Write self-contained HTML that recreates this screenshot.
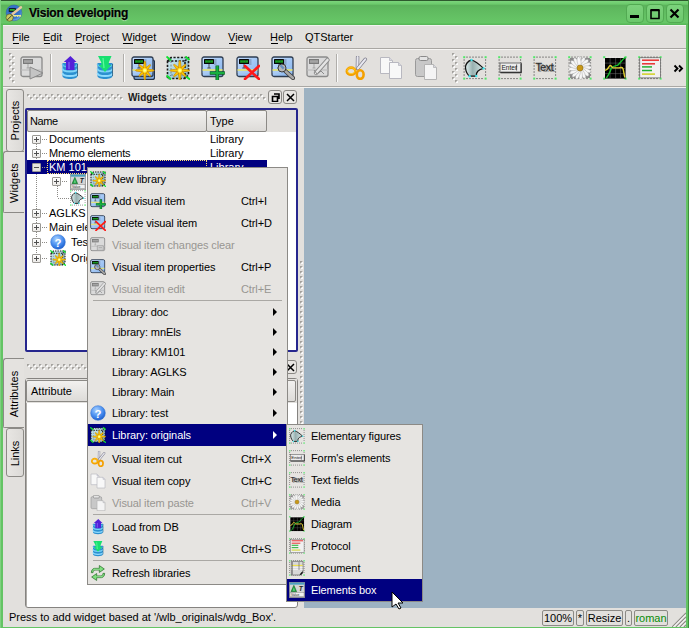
<!DOCTYPE html>
<html><head><meta charset="utf-8">
<style>
*{box-sizing:border-box;margin:0;padding:0}
html,body{width:689px;height:628px;overflow:hidden}
body{position:relative;background:#62c262;font-family:"Liberation Sans",sans-serif;font-size:11px;color:#000}
.a{position:absolute}
.t{position:absolute;white-space:nowrap;line-height:14px;font-size:11px}
.ul{text-decoration:underline}
.w{color:#fff}
.dis{color:#989692}
</style></head><body>
<div class="a" style="left:0px;top:0px;width:689px;height:628px;background:#64c464"></div>
<div class="a" style="left:0px;top:0px;width:689px;height:1px;background:#2e5a2e"></div>
<div class="a" style="left:0px;top:1px;width:689px;height:24px;background:linear-gradient(#7cd47c 0,#6ccb6c 3px,#5cb35c 4.5px,#5fb95f 8px,#67c767 22px,#58b858 23px,#58b858 24px)"></div>
<div class="a" style="left:0px;top:0px;width:1px;height:628px;background:#80d080"></div>
<div class="a" style="left:688px;top:0px;width:1px;height:628px;background:#3e8e3e"></div>
<svg class="a" style="left:5px;top:4px" width="18" height="18" viewBox="5 4 18 18"><defs><radialGradient id="gapp" cx=".45" cy=".4" r=".6"><stop offset="0" stop-color="#2a5cb8"/><stop offset=".75" stop-color="#3a7ad0"/><stop offset="1" stop-color="#7ab0e8"/></radialGradient></defs><circle cx="14" cy="12.9" r="7.9" fill="url(#gapp)" stroke="#2a5aa0" stroke-width=".5"/><rect x="8.8" y="8.2" width="7" height="3.6" fill="#0a0a0a"/><rect x="9.6" y="9.1" width="5.2" height="1.6" fill="#30c030"/><path d="M12.5 14L21 7.2" stroke="#e8c8a0" stroke-width="2.4" stroke-linecap="round"/><path d="M12.5 15.6H21M15 15.6v1.5M17.5 15.6v1.5M20 15.6v1.3" stroke="#e8e890" stroke-width="1.1"/><circle cx="9.6" cy="17.6" r="3.6" fill="#c8c860" stroke="#50501a" stroke-width=".6"/><path d="M7.2 20l4.8-4.8" stroke="#333" stroke-width=".9"/></svg>
<div class="t" style="left:29px;top:6px;font-size:12px;font-weight:bold;line-height:15px;letter-spacing:-0.2px;-webkit-text-stroke:0.25px #000;text-shadow:0 1px 1px rgba(220,255,220,.6)">Vision developing</div>
<div class="a" style="left:626px;top:4px;width:18px;height:19px;border-radius:4px;background:linear-gradient(#7cd27c,#6cc86c);border:1px solid #52aa52"></div>
<div class="a" style="left:646px;top:4px;width:18px;height:19px;border-radius:4px;background:linear-gradient(#7cd27c,#6cc86c);border:1px solid #52aa52"></div>
<div class="a" style="left:666px;top:4px;width:18px;height:19px;border-radius:4px;background:linear-gradient(#7cd27c,#6cc86c);border:1px solid #52aa52"></div>
<svg class="a" style="left:626px;top:4px" width="60" height="19"><rect x="4" y="11" width="9" height="3" fill="#000"/><path d="M25 6.5h8v8h-8z" fill="none" stroke="#000" stroke-width="1.6"/><path d="M24.5 6h9" stroke="#000" stroke-width="2"/><path d="M44.5 5.5l8 8M52.5 5.5l-8 8" stroke="#000" stroke-width="2.2"/></svg>
<div class="a" style="left:3px;top:25px;width:683px;height:602px;background:#e2e0dd"></div>
<div class="a" style="left:3px;top:25px;width:683px;height:1px;background:#f4f3f1"></div>
<div class="a" style="left:3px;top:48px;width:683px;height:1px;background:#a9a7a3"></div>
<div class="a" style="left:3px;top:49px;width:683px;height:1px;background:#f6f5f3"></div>
<div class="t" style="left:12px;top:30px;">File</div>
<div class="a" style="left:13px;top:43px;width:6px;height:1px;background:#000"></div>
<div class="t" style="left:43px;top:30px;">Edit</div>
<div class="a" style="left:44px;top:43px;width:6px;height:1px;background:#000"></div>
<div class="t" style="left:75px;top:30px;">Project</div>
<div class="a" style="left:76px;top:43px;width:6px;height:1px;background:#000"></div>
<div class="t" style="left:122px;top:30px;">Widget</div>
<div class="a" style="left:123px;top:43px;width:10px;height:1px;background:#000"></div>
<div class="t" style="left:171px;top:30px;">Window</div>
<div class="a" style="left:172px;top:43px;width:10px;height:1px;background:#000"></div>
<div class="t" style="left:228px;top:30px;">View</div>
<div class="a" style="left:229px;top:43px;width:7px;height:1px;background:#000"></div>
<div class="t" style="left:270px;top:30px;">Help</div>
<div class="a" style="left:271px;top:43px;width:7px;height:1px;background:#000"></div>
<div class="t" style="left:305px;top:30px;">QTStarter</div>
<div class="a" style="left:3px;top:86px;width:683px;height:1px;background:#aaa8a4"></div>
<div class="a" style="left:3px;top:87px;width:683px;height:1px;background:#f4f3f1"></div>
<div class="a" style="left:9px;top:53px;width:3px;height:3px;background:linear-gradient(135deg,#a4a29e 45%,#fbfbfb 55%)"></div><div class="a" style="left:12px;top:56px;width:3px;height:3px;background:linear-gradient(135deg,#a4a29e 45%,#fbfbfb 55%)"></div><div class="a" style="left:9px;top:59px;width:3px;height:3px;background:linear-gradient(135deg,#a4a29e 45%,#fbfbfb 55%)"></div><div class="a" style="left:12px;top:62px;width:3px;height:3px;background:linear-gradient(135deg,#a4a29e 45%,#fbfbfb 55%)"></div><div class="a" style="left:9px;top:65px;width:3px;height:3px;background:linear-gradient(135deg,#a4a29e 45%,#fbfbfb 55%)"></div><div class="a" style="left:12px;top:68px;width:3px;height:3px;background:linear-gradient(135deg,#a4a29e 45%,#fbfbfb 55%)"></div><div class="a" style="left:9px;top:71px;width:3px;height:3px;background:linear-gradient(135deg,#a4a29e 45%,#fbfbfb 55%)"></div><div class="a" style="left:12px;top:74px;width:3px;height:3px;background:linear-gradient(135deg,#a4a29e 45%,#fbfbfb 55%)"></div><div class="a" style="left:9px;top:77px;width:3px;height:3px;background:linear-gradient(135deg,#a4a29e 45%,#fbfbfb 55%)"></div><div class="a" style="left:12px;top:80px;width:3px;height:3px;background:linear-gradient(135deg,#a4a29e 45%,#fbfbfb 55%)"></div>
<div class="a" style="left:452px;top:53px;width:3px;height:3px;background:linear-gradient(135deg,#a4a29e 45%,#fbfbfb 55%)"></div><div class="a" style="left:455px;top:56px;width:3px;height:3px;background:linear-gradient(135deg,#a4a29e 45%,#fbfbfb 55%)"></div><div class="a" style="left:452px;top:59px;width:3px;height:3px;background:linear-gradient(135deg,#a4a29e 45%,#fbfbfb 55%)"></div><div class="a" style="left:455px;top:62px;width:3px;height:3px;background:linear-gradient(135deg,#a4a29e 45%,#fbfbfb 55%)"></div><div class="a" style="left:452px;top:65px;width:3px;height:3px;background:linear-gradient(135deg,#a4a29e 45%,#fbfbfb 55%)"></div><div class="a" style="left:455px;top:68px;width:3px;height:3px;background:linear-gradient(135deg,#a4a29e 45%,#fbfbfb 55%)"></div><div class="a" style="left:452px;top:71px;width:3px;height:3px;background:linear-gradient(135deg,#a4a29e 45%,#fbfbfb 55%)"></div><div class="a" style="left:455px;top:74px;width:3px;height:3px;background:linear-gradient(135deg,#a4a29e 45%,#fbfbfb 55%)"></div><div class="a" style="left:452px;top:77px;width:3px;height:3px;background:linear-gradient(135deg,#a4a29e 45%,#fbfbfb 55%)"></div><div class="a" style="left:455px;top:80px;width:3px;height:3px;background:linear-gradient(135deg,#a4a29e 45%,#fbfbfb 55%)"></div>
<div class="a" style="left:50px;top:54px;width:1px;height:28px;background:#b0aeaa"></div>
<div class="a" style="left:51px;top:54px;width:1px;height:28px;background:#fbfbfb"></div>
<div class="a" style="left:123px;top:54px;width:1px;height:28px;background:#b0aeaa"></div>
<div class="a" style="left:124px;top:54px;width:1px;height:28px;background:#fbfbfb"></div>
<div class="a" style="left:336px;top:54px;width:1px;height:28px;background:#b0aeaa"></div>
<div class="a" style="left:337px;top:54px;width:1px;height:28px;background:#fbfbfb"></div>
<svg class="a" style="left:20px;top:56px" width="24" height="24" viewBox="0 0 24 24"><rect x="1" y="1" width="21" height="19.5" rx="2" fill="#dadada" stroke="#8a8a8a" stroke-width="1.3"/><rect x="3" y="3" width="10" height="5" fill="#7a7a7a"/><rect x="4" y="4.2" width="8" height="2.6" fill="#a4a4a4"/><path d="M1.5 14h20" stroke="#c4c4c4" stroke-width="1.6"/><path d="M8 8v4M6.5 12h3" stroke="#9a9a9a" stroke-width=".8"/><path d="M10 11v12l13-6z" fill="#c4c4c4" stroke="#8a8a8a" stroke-width="1"/></svg>
<svg class="a" style="left:58px;top:56px" width="24" height="24" viewBox="0 0 24 24"><path d="M4.5 7v13c0 2 3.5 3 7.5 3s7.5-1 7.5-3V7z" fill="#2c90d0"/><path d="M4.5 8c0 2 3.5 3 7.5 3s7.5-1 7.5-3" fill="none" stroke="#60c0f0" stroke-width="1.6"/><path d="M4.5 12.5c0 2 3.5 3 7.5 3s7.5-1 7.5-3" fill="none" stroke="#80d4f8" stroke-width="1.8"/><path d="M4.5 17c0 2 3.5 3 7.5 3s7.5-1 7.5-3" fill="none" stroke="#90dcff" stroke-width="1.8"/><path d="M19.5 8v12" stroke="#1c4a6a" stroke-width="1" opacity=".7"/><path d="M12.4 0L18.6 6H16.5V14H8V6H5.8Z" fill="#5420d8"/><path d="M11 6v7" stroke="#7a58f0" stroke-width="1.5"/></svg>
<svg class="a" style="left:93px;top:56px" width="24" height="24" viewBox="0 0 24 24"><path d="M4.5 7v13c0 2 3.5 3 7.5 3s7.5-1 7.5-3V7z" fill="#2c90d0"/><path d="M4.5 8c0 2 3.5 3 7.5 3s7.5-1 7.5-3" fill="none" stroke="#60c0f0" stroke-width="1.6"/><path d="M4.5 12.5c0 2 3.5 3 7.5 3s7.5-1 7.5-3" fill="none" stroke="#80d4f8" stroke-width="1.8"/><path d="M4.5 17c0 2 3.5 3 7.5 3s7.5-1 7.5-3" fill="none" stroke="#90dcff" stroke-width="1.8"/><path d="M19.5 8v12" stroke="#1c4a6a" stroke-width="1" opacity=".7"/><path d="M5 0H18.5L15.8 6.5V9H18.3L12 16L5.8 9H8.3V6.5Z" fill="#18e070"/><path d="M10 2l1 10" stroke="#60f8a0" stroke-width="1.2"/></svg>
<svg class="a" style="left:131px;top:56px" width="24" height="24" viewBox="0 0 24 24"><defs><linearGradient id="gb2" x1="0" y1="0" x2="1" y2="1"><stop offset="0" stop-color="#c4deff"/><stop offset="1" stop-color="#84b2ec"/></linearGradient></defs><rect x="3" y="4" width="20.5" height="19.5" rx="2" fill="#8ab6ee" stroke="#23334a" stroke-width="1.3"/><rect x="1" y="1" width="21" height="19.5" rx="2" fill="url(#gb2)" stroke="#2e3c50" stroke-width="1.3"/><rect x="13" y="3" width="2.5" height="6" fill="#7890b0" opacity=".6"/><rect x="3" y="3" width="10" height="5" rx=".5" fill="#060606"/><rect x="4" y="4.3" width="8" height="2.4" fill="#1ea01e"/><path d="M4.5 4.3v2.4M7 4.3v2.4M9.5 4.3v2.4" stroke="#063" stroke-width=".5"/><path d="M8 8v4M6.3 12h3.4" stroke="#444" stroke-width=".9"/><path d="M1.5 14h20" stroke="#e2e27a" stroke-width="1.8"/><path d="M1.5 16h20" stroke="#b4d0f0" stroke-width=".8"/><path d="M13.80 16.20 L22.60 15.10 L23.20 14.50 L22.60 13.90 L13.80 12.80ZM12.60 15.70 L18.68 20.23 L19.53 20.23 L19.53 19.38 L15.00 13.30ZM12.10 14.50 L13.20 23.30 L13.80 23.90 L14.40 23.30 L15.50 14.50ZM12.60 13.30 L8.07 19.38 L8.07 20.23 L8.92 20.23 L15.00 15.70ZM13.80 12.80 L5.00 13.90 L4.40 14.50 L5.00 15.10 L13.80 16.20ZM15.00 13.30 L8.92 8.77 L8.07 8.77 L8.07 9.62 L12.60 15.70ZM15.50 14.50 L14.40 5.70 L13.80 5.10 L13.20 5.70 L12.10 14.50ZM15.00 15.70 L19.53 9.62 L19.53 8.77 L18.68 8.77 L12.60 13.30Z" fill="#ffcc00" stroke="#d08800" stroke-width=".7" stroke-linejoin="round"/><circle cx="13.8" cy="14.5" r="2.4" fill="#ffee40"/><circle cx="13.8" cy="14.5" r="1.3" fill="#ffffa0"/></svg>
<svg class="a" style="left:166px;top:56px" width="24" height="24" viewBox="0 0 24 24"><defs><linearGradient id="gl3" x1="0" y1="0" x2="1" y2="1"><stop offset="0" stop-color="#d8eef4"/><stop offset=".5" stop-color="#a8d0dc"/><stop offset="1" stop-color="#84b4c4"/></linearGradient></defs><path d="M1.5 5L5 1.5H22.5V19L19 22.5H1.5Z" fill="url(#gl3)"/><g fill="none" stroke="#5a7a84" stroke-width=".8" stroke-dasharray="2 1.5"><path d="M5 1.5V19H22.5M5 19L1.5 22.5"/></g><g fill="none" stroke="#1a1a1a" stroke-width="1.6" stroke-dasharray="2.2 1.5"><path d="M1.5 5L5 1.5H22.5V19L19 22.5H1.5Z"/><path d="M1.5 5H19V22.5M19 5L22.5 1.5"/></g><path d="M0.5 0.5l4.5 4M19.5 0.5l4 3.5M0.5 19.5l4.5 4M20 20.5l4 3" stroke="#10e030" stroke-width="1.9"/><path d="M13.80 16.20 L23.20 15.10 L23.80 14.50 L23.20 13.90 L13.80 12.80ZM12.60 15.70 L19.03 20.58 L19.88 20.58 L19.88 19.73 L15.00 13.30ZM12.10 14.50 L13.20 23.90 L13.80 24.50 L14.40 23.90 L15.50 14.50ZM12.60 13.30 L7.72 19.73 L7.72 20.58 L8.57 20.58 L15.00 15.70ZM13.80 12.80 L4.40 13.90 L3.80 14.50 L4.40 15.10 L13.80 16.20ZM15.00 13.30 L8.57 8.42 L7.72 8.42 L7.72 9.27 L12.60 15.70ZM15.50 14.50 L14.40 5.10 L13.80 4.50 L13.20 5.10 L12.10 14.50ZM15.00 15.70 L19.88 9.27 L19.88 8.42 L19.03 8.42 L12.60 13.30Z" fill="#ffcc00" stroke="#d08800" stroke-width=".7" stroke-linejoin="round"/><circle cx="13.8" cy="14.5" r="2.4" fill="#ffee40"/><circle cx="13.8" cy="14.5" r="1.3" fill="#ffffa0"/></svg>
<svg class="a" style="left:201px;top:56px" width="24" height="24" viewBox="0 0 24 24"><defs><linearGradient id="gb4" x1="0" y1="0" x2="1" y2="1"><stop offset="0" stop-color="#c4deff"/><stop offset="1" stop-color="#84b2ec"/></linearGradient></defs><rect x="1" y="1" width="21" height="19.5" rx="2" fill="url(#gb4)" stroke="#2e3c50" stroke-width="1.3"/><rect x="13" y="3" width="2.5" height="6" fill="#7890b0" opacity=".6"/><rect x="3" y="3" width="10" height="5" rx=".5" fill="#060606"/><rect x="4" y="4.3" width="8" height="2.4" fill="#1ea01e"/><path d="M4.5 4.3v2.4M7 4.3v2.4M9.5 4.3v2.4" stroke="#063" stroke-width=".5"/><path d="M8 8v4M6.3 12h3.4" stroke="#444" stroke-width=".9"/><path d="M1.5 14h20" stroke="#e2e27a" stroke-width="1.8"/><path d="M1.5 16h20" stroke="#b4d0f0" stroke-width=".8"/><path d="M16.3 9.5v15M8.8 17h15" stroke="#0a5a20" stroke-width="3.6"/><path d="M16.3 10v14M9.3 17h14" stroke="#18b040" stroke-width="2.2"/></svg>
<svg class="a" style="left:236px;top:56px" width="24" height="24" viewBox="0 0 24 24"><defs><linearGradient id="gb5" x1="0" y1="0" x2="1" y2="1"><stop offset="0" stop-color="#c4deff"/><stop offset="1" stop-color="#84b2ec"/></linearGradient></defs><rect x="1" y="1" width="21" height="19.5" rx="2" fill="url(#gb5)" stroke="#2e3c50" stroke-width="1.3"/><rect x="13" y="3" width="2.5" height="6" fill="#7890b0" opacity=".6"/><rect x="3" y="3" width="10" height="5" rx=".5" fill="#060606"/><rect x="4" y="4.3" width="8" height="2.4" fill="#1ea01e"/><path d="M4.5 4.3v2.4M7 4.3v2.4M9.5 4.3v2.4" stroke="#063" stroke-width=".5"/><path d="M8 8v4M6.3 12h3.4" stroke="#444" stroke-width=".9"/><path d="M1.5 14h20" stroke="#e2e27a" stroke-width="1.8"/><path d="M1.5 16h20" stroke="#b4d0f0" stroke-width=".8"/><path d="M9 10l14 13M23 10L9 23" stroke="#ff1818" stroke-width="2.6" stroke-linecap="round"/></svg>
<svg class="a" style="left:271px;top:56px" width="24" height="24" viewBox="0 0 24 24"><defs><linearGradient id="gb6" x1="0" y1="0" x2="1" y2="1"><stop offset="0" stop-color="#c4deff"/><stop offset="1" stop-color="#84b2ec"/></linearGradient></defs><rect x="1" y="1" width="21" height="19.5" rx="2" fill="url(#gb6)" stroke="#2e3c50" stroke-width="1.3"/><rect x="13" y="3" width="2.5" height="6" fill="#7890b0" opacity=".6"/><rect x="3" y="3" width="10" height="5" rx=".5" fill="#060606"/><rect x="4" y="4.3" width="8" height="2.4" fill="#1ea01e"/><path d="M4.5 4.3v2.4M7 4.3v2.4M9.5 4.3v2.4" stroke="#063" stroke-width=".5"/><path d="M8 8v4M6.3 12h3.4" stroke="#444" stroke-width=".9"/><path d="M1.5 14h20" stroke="#e2e27a" stroke-width="1.8"/><path d="M1.5 16h20" stroke="#b4d0f0" stroke-width=".8"/><path d="M12 13l10 9" stroke="#3a3a3a" stroke-width="4.2" stroke-linecap="round"/><path d="M12 13l10 9" stroke="#a8a8a8" stroke-width="2.6" stroke-linecap="round"/><circle cx="11" cy="12" r="4" fill="#b8b8b8" stroke="#3a3a3a" stroke-width="1"/><path d="M9.5 9.2l3.2 3.4" stroke="#6a90c0" stroke-width="2.4"/></svg>
<svg class="a" style="left:306px;top:56px" width="24" height="24" viewBox="0 0 24 24"><rect x="1" y="1" width="21" height="19.5" rx="2" fill="#dadada" stroke="#8a8a8a" stroke-width="1.3"/><rect x="3" y="3" width="10" height="5" fill="#7a7a7a"/><rect x="4" y="4.2" width="8" height="2.6" fill="#a4a4a4"/><path d="M1.5 14h20" stroke="#c4c4c4" stroke-width="1.6"/><path d="M8 8v4M6.5 12h3" stroke="#9a9a9a" stroke-width=".8"/><path d="M10 17L21.5 4" stroke="#8a8a8a" stroke-width="4.2" stroke-linecap="round"/><path d="M10 17L21.5 4" stroke="#e4e4e4" stroke-width="2.6" stroke-linecap="round"/><path d="M8 14l3 4M12 17l3-2 3 3" stroke="#8a8a8a" fill="none" stroke-width="1"/></svg>
<svg class="a" style="left:344px;top:56px" width="24" height="24" viewBox="0 0 24 24"><path d="M13.6 1L13.4 12.5" stroke="#7a7a88" stroke-width="3.4" stroke-linecap="round"/><path d="M13.6 1L13.4 12.5" stroke="#e8e8f0" stroke-width="2" stroke-linecap="round"/><path d="M21.4 3.2L13.8 12.5" stroke="#7a7a88" stroke-width="3.4" stroke-linecap="round"/><path d="M21.4 3.2L13.8 12.5" stroke="#e8e8f0" stroke-width="2" stroke-linecap="round"/><ellipse cx="7.1" cy="15.2" rx="4.3" ry="3.6" fill="none" stroke="#f4a000" stroke-width="2.6"/><ellipse cx="16.2" cy="18.6" rx="3.4" ry="4.3" fill="none" stroke="#f4a000" stroke-width="2.6"/><ellipse cx="7.1" cy="14.6" rx="4" ry="3" fill="none" stroke="#ffd020" stroke-width="1" opacity=".8"/></svg>
<svg class="a" style="left:379px;top:56px" width="24" height="24" viewBox="0 0 24 24"><path d="M1.5 1.5H10.5L13.5 4.5V17.5H1.5Z" fill="#f8f8f8" stroke="#b8b8c0" stroke-width="1"/><path d="M10.5 1.5V4.5H13.5" fill="#d8d8e0" stroke="#b8b8c0" stroke-width=".8"/><path d="M10.5 6.5H19.5L22.5 9.5V22.5H10.5Z" fill="#f8f8f8" stroke="#b8b8c0" stroke-width="1"/><path d="M19.5 6.5V9.5H22.5" fill="#d8d8e0" stroke="#b8b8c0" stroke-width=".8"/></svg>
<svg class="a" style="left:414px;top:56px" width="24" height="24" viewBox="0 0 24 24"><rect x="1.5" y="2.5" width="16" height="18" rx="2" fill="#c8c8c8" stroke="#9a9a9a"/><rect x="5" y="0.5" width="9" height="4" rx="1.5" fill="#e4e4e4" stroke="#8a8a8a"/><path d="M10.5 8.5H19.5L22.5 11.5V23.5H10.5Z" fill="#f4f4f4" stroke="#b4b4b4" stroke-width="1"/><path d="M19.5 8.5V11.5H22.5" fill="#d8d8e0" stroke="#b4b4b4" stroke-width=".8"/></svg>
<svg class="a" style="left:463px;top:56px" width="24" height="24" viewBox="0 0 24 24"><g fill="#2a2a2a"><rect x="3.5" y=".6" width="1" height="1"/><rect x="3.5" y="22.1" width="1" height="1"/><rect x=".6" y="3.5" width="1" height="1"/><rect x="22.1" y="3.5" width="1" height="1"/><rect x="6.5" y=".6" width="1" height="1"/><rect x="6.5" y="22.1" width="1" height="1"/><rect x=".6" y="6.5" width="1" height="1"/><rect x="22.1" y="6.5" width="1" height="1"/><rect x="9.5" y=".6" width="1" height="1"/><rect x="9.5" y="22.1" width="1" height="1"/><rect x=".6" y="9.5" width="1" height="1"/><rect x="22.1" y="9.5" width="1" height="1"/><rect x="12.5" y=".6" width="1" height="1"/><rect x="12.5" y="22.1" width="1" height="1"/><rect x=".6" y="12.5" width="1" height="1"/><rect x="22.1" y="12.5" width="1" height="1"/><rect x="15.5" y=".6" width="1" height="1"/><rect x="15.5" y="22.1" width="1" height="1"/><rect x=".6" y="15.5" width="1" height="1"/><rect x="22.1" y="15.5" width="1" height="1"/><rect x="18.5" y=".6" width="1" height="1"/><rect x="18.5" y="22.1" width="1" height="1"/><rect x=".6" y="18.5" width="1" height="1"/><rect x="22.1" y="18.5" width="1" height="1"/></g><g fill="#50e868"><rect x=".2" y=".2" width="2" height="2"/><rect x="21.6" y=".2" width="2" height="2"/><rect x=".2" y="21.6" width="2" height="2"/><rect x="21.6" y="21.6" width="2" height="2"/></g><defs><linearGradient id="ge8" x1="0" y1="0" x2="1" y2="0"><stop offset="0" stop-color="#e0f0f0"/><stop offset=".4" stop-color="#98b0b0"/><stop offset="1" stop-color="#d8e8e8"/></linearGradient></defs><path d="M8.5 4C4.5 5 2 9 2.5 12C3 16 5 19 6.6 20.2L13.3 20C13 16 15 13.5 20.5 12.4C17 9 12 5 8.5 4Z" fill="url(#ge8)" stroke="#111" stroke-width="1.3"/><g fill="#40e8f0"><circle cx="8.5" cy="4" r="1.2"/><circle cx="20.5" cy="12.4" r="1.2"/><circle cx="13.3" cy="20" r="1.2"/><circle cx="6.6" cy="20.2" r="1.2"/></g></svg>
<svg class="a" style="left:498px;top:56px" width="24" height="24" viewBox="0 0 24 24"><g fill="#2a2a2a"><rect x="3.5" y=".6" width="1" height="1"/><rect x="3.5" y="22.1" width="1" height="1"/><rect x=".6" y="3.5" width="1" height="1"/><rect x="22.1" y="3.5" width="1" height="1"/><rect x="6.5" y=".6" width="1" height="1"/><rect x="6.5" y="22.1" width="1" height="1"/><rect x=".6" y="6.5" width="1" height="1"/><rect x="22.1" y="6.5" width="1" height="1"/><rect x="9.5" y=".6" width="1" height="1"/><rect x="9.5" y="22.1" width="1" height="1"/><rect x=".6" y="9.5" width="1" height="1"/><rect x="22.1" y="9.5" width="1" height="1"/><rect x="12.5" y=".6" width="1" height="1"/><rect x="12.5" y="22.1" width="1" height="1"/><rect x=".6" y="12.5" width="1" height="1"/><rect x="22.1" y="12.5" width="1" height="1"/><rect x="15.5" y=".6" width="1" height="1"/><rect x="15.5" y="22.1" width="1" height="1"/><rect x=".6" y="15.5" width="1" height="1"/><rect x="22.1" y="15.5" width="1" height="1"/><rect x="18.5" y=".6" width="1" height="1"/><rect x="18.5" y="22.1" width="1" height="1"/><rect x=".6" y="18.5" width="1" height="1"/><rect x="22.1" y="18.5" width="1" height="1"/></g><g fill="#50e868"><rect x=".2" y=".2" width="2" height="2"/><rect x="21.6" y=".2" width="2" height="2"/><rect x=".2" y="21.6" width="2" height="2"/><rect x="21.6" y="21.6" width="2" height="2"/></g><rect x="2" y="7" width="21.5" height="9.5" fill="#ececec" stroke="#555" stroke-width=".8"/><path d="M2.5 16.5h21" stroke="#333" stroke-width="1.6"/><path d="M23 7.5v9" stroke="#333" stroke-width="1.2"/><text x="3.4" y="14" font-family="Liberation Sans" font-size="6.6" fill="#222">Enter</text><path d="M18.6 8.5v6" stroke="#333" stroke-width=".8"/></svg>
<svg class="a" style="left:533px;top:56px" width="24" height="24" viewBox="0 0 24 24"><g fill="#2a2a2a"><rect x="3.5" y=".6" width="1" height="1"/><rect x="3.5" y="22.1" width="1" height="1"/><rect x=".6" y="3.5" width="1" height="1"/><rect x="22.1" y="3.5" width="1" height="1"/><rect x="6.5" y=".6" width="1" height="1"/><rect x="6.5" y="22.1" width="1" height="1"/><rect x=".6" y="6.5" width="1" height="1"/><rect x="22.1" y="6.5" width="1" height="1"/><rect x="9.5" y=".6" width="1" height="1"/><rect x="9.5" y="22.1" width="1" height="1"/><rect x=".6" y="9.5" width="1" height="1"/><rect x="22.1" y="9.5" width="1" height="1"/><rect x="12.5" y=".6" width="1" height="1"/><rect x="12.5" y="22.1" width="1" height="1"/><rect x=".6" y="12.5" width="1" height="1"/><rect x="22.1" y="12.5" width="1" height="1"/><rect x="15.5" y=".6" width="1" height="1"/><rect x="15.5" y="22.1" width="1" height="1"/><rect x=".6" y="15.5" width="1" height="1"/><rect x="22.1" y="15.5" width="1" height="1"/><rect x="18.5" y=".6" width="1" height="1"/><rect x="18.5" y="22.1" width="1" height="1"/><rect x=".6" y="18.5" width="1" height="1"/><rect x="22.1" y="18.5" width="1" height="1"/></g><g fill="#50e868"><rect x=".2" y=".2" width="2" height="2"/><rect x="21.6" y=".2" width="2" height="2"/><rect x=".2" y="21.6" width="2" height="2"/><rect x="21.6" y="21.6" width="2" height="2"/></g><text x="2.4" y="15.2" font-family="Liberation Serif" font-size="11.5" fill="#999" letter-spacing="-.4" transform="translate(1 1.2)">Text</text><text x="2.4" y="15.2" font-family="Liberation Sans" font-size="10.5" fill="#1a1a1a" letter-spacing="-.35" stroke="#444" stroke-width=".3">Text</text></svg>
<svg class="a" style="left:568px;top:56px" width="24" height="24" viewBox="0 0 24 24"><g fill="#2a2a2a"><rect x="3.5" y=".6" width="1" height="1"/><rect x="3.5" y="22.1" width="1" height="1"/><rect x=".6" y="3.5" width="1" height="1"/><rect x="22.1" y="3.5" width="1" height="1"/><rect x="6.5" y=".6" width="1" height="1"/><rect x="6.5" y="22.1" width="1" height="1"/><rect x=".6" y="6.5" width="1" height="1"/><rect x="22.1" y="6.5" width="1" height="1"/><rect x="9.5" y=".6" width="1" height="1"/><rect x="9.5" y="22.1" width="1" height="1"/><rect x=".6" y="9.5" width="1" height="1"/><rect x="22.1" y="9.5" width="1" height="1"/><rect x="12.5" y=".6" width="1" height="1"/><rect x="12.5" y="22.1" width="1" height="1"/><rect x=".6" y="12.5" width="1" height="1"/><rect x="22.1" y="12.5" width="1" height="1"/><rect x="15.5" y=".6" width="1" height="1"/><rect x="15.5" y="22.1" width="1" height="1"/><rect x=".6" y="15.5" width="1" height="1"/><rect x="22.1" y="15.5" width="1" height="1"/><rect x="18.5" y=".6" width="1" height="1"/><rect x="18.5" y="22.1" width="1" height="1"/><rect x=".6" y="18.5" width="1" height="1"/><rect x="22.1" y="18.5" width="1" height="1"/></g><g fill="#50e868"><rect x=".2" y=".2" width="2" height="2"/><rect x="21.6" y=".2" width="2" height="2"/><rect x=".2" y="21.6" width="2" height="2"/><rect x="21.6" y="21.6" width="2" height="2"/></g><rect x="2" y="2" width="20" height="20" fill="#8a8a8a"/><ellipse cx="12" cy="5.6" rx="1.9" ry="5.2" fill="#f6f6f6" stroke="#999" stroke-width=".4" transform="rotate(0 12 12)"/><ellipse cx="12" cy="5.6" rx="1.9" ry="5.2" fill="#f6f6f6" stroke="#999" stroke-width=".4" transform="rotate(22 12 12)"/><ellipse cx="12" cy="5.6" rx="1.9" ry="5.2" fill="#f6f6f6" stroke="#999" stroke-width=".4" transform="rotate(44 12 12)"/><ellipse cx="12" cy="5.6" rx="1.9" ry="5.2" fill="#f6f6f6" stroke="#999" stroke-width=".4" transform="rotate(66 12 12)"/><ellipse cx="12" cy="5.6" rx="1.9" ry="5.2" fill="#f6f6f6" stroke="#999" stroke-width=".4" transform="rotate(88 12 12)"/><ellipse cx="12" cy="5.6" rx="1.9" ry="5.2" fill="#f6f6f6" stroke="#999" stroke-width=".4" transform="rotate(110 12 12)"/><ellipse cx="12" cy="5.6" rx="1.9" ry="5.2" fill="#f6f6f6" stroke="#999" stroke-width=".4" transform="rotate(132 12 12)"/><ellipse cx="12" cy="5.6" rx="1.9" ry="5.2" fill="#f6f6f6" stroke="#999" stroke-width=".4" transform="rotate(154 12 12)"/><ellipse cx="12" cy="5.6" rx="1.9" ry="5.2" fill="#f6f6f6" stroke="#999" stroke-width=".4" transform="rotate(176 12 12)"/><ellipse cx="12" cy="5.6" rx="1.9" ry="5.2" fill="#f6f6f6" stroke="#999" stroke-width=".4" transform="rotate(198 12 12)"/><ellipse cx="12" cy="5.6" rx="1.9" ry="5.2" fill="#f6f6f6" stroke="#999" stroke-width=".4" transform="rotate(220 12 12)"/><ellipse cx="12" cy="5.6" rx="1.9" ry="5.2" fill="#f6f6f6" stroke="#999" stroke-width=".4" transform="rotate(242 12 12)"/><ellipse cx="12" cy="5.6" rx="1.9" ry="5.2" fill="#f6f6f6" stroke="#999" stroke-width=".4" transform="rotate(264 12 12)"/><ellipse cx="12" cy="5.6" rx="1.9" ry="5.2" fill="#f6f6f6" stroke="#999" stroke-width=".4" transform="rotate(286 12 12)"/><ellipse cx="12" cy="5.6" rx="1.9" ry="5.2" fill="#f6f6f6" stroke="#999" stroke-width=".4" transform="rotate(308 12 12)"/><ellipse cx="12" cy="5.6" rx="1.9" ry="5.2" fill="#f6f6f6" stroke="#999" stroke-width=".4" transform="rotate(330 12 12)"/><ellipse cx="12" cy="5.6" rx="1.9" ry="5.2" fill="#f6f6f6" stroke="#999" stroke-width=".4" transform="rotate(352 12 12)"/><circle cx="12" cy="12" r="3" fill="#c89818" stroke="#806010" stroke-width=".5"/></svg>
<svg class="a" style="left:603px;top:56px" width="24" height="24" viewBox="0 0 24 24"><g fill="#f4f4f4"><rect x="3.5" y=".6" width="1" height="1"/><rect x="3.5" y="22.1" width="1" height="1"/><rect x=".6" y="3.5" width="1" height="1"/><rect x="22.1" y="3.5" width="1" height="1"/><rect x="6.5" y=".6" width="1" height="1"/><rect x="6.5" y="22.1" width="1" height="1"/><rect x=".6" y="6.5" width="1" height="1"/><rect x="22.1" y="6.5" width="1" height="1"/><rect x="9.5" y=".6" width="1" height="1"/><rect x="9.5" y="22.1" width="1" height="1"/><rect x=".6" y="9.5" width="1" height="1"/><rect x="22.1" y="9.5" width="1" height="1"/><rect x="12.5" y=".6" width="1" height="1"/><rect x="12.5" y="22.1" width="1" height="1"/><rect x=".6" y="12.5" width="1" height="1"/><rect x="22.1" y="12.5" width="1" height="1"/><rect x="15.5" y=".6" width="1" height="1"/><rect x="15.5" y="22.1" width="1" height="1"/><rect x=".6" y="15.5" width="1" height="1"/><rect x="22.1" y="15.5" width="1" height="1"/><rect x="18.5" y=".6" width="1" height="1"/><rect x="18.5" y="22.1" width="1" height="1"/><rect x=".6" y="18.5" width="1" height="1"/><rect x="22.1" y="18.5" width="1" height="1"/></g><g fill="#50e868"><rect x=".2" y=".2" width="2" height="2"/><rect x="21.6" y=".2" width="2" height="2"/><rect x=".2" y="21.6" width="2" height="2"/><rect x="21.6" y="21.6" width="2" height="2"/></g><rect x="2" y="2" width="20.6" height="20.6" fill="#000"/><path d="M7.1 2v20" stroke="#707070" stroke-width=".5"/><path d="M12.6 2v20" stroke="#707070" stroke-width=".5"/><path d="M17.6 2v20" stroke="#707070" stroke-width=".5"/><path d="M2 7.1h20" stroke="#707070" stroke-width=".5"/><path d="M2 12.6h20" stroke="#707070" stroke-width=".5"/><path d="M2 17.6h20" stroke="#707070" stroke-width=".5"/><path d="M3.3 21.9C6 19 7 16 8.5 11.9C10 10 12 9.8 14.7 9.2C18 6 19 4 22.4 1.3" stroke="#18c030" fill="none" stroke-width="1.4"/><path d="M2 14.3L4.2 13.3C6 11 6.5 9.5 7.1 9.5C9 9.5 9 11.9 10 11.9H16.2C18 11 19.5 11.5 20 12.8C21 16 21 19 21.9 21.4" stroke="#e0d030" fill="none" stroke-width="1.4"/></svg>
<svg class="a" style="left:638px;top:56px" width="24" height="24" viewBox="0 0 24 24"><g fill="#2a2a2a"><rect x="3.5" y=".6" width="1" height="1"/><rect x="3.5" y="22.1" width="1" height="1"/><rect x=".6" y="3.5" width="1" height="1"/><rect x="22.1" y="3.5" width="1" height="1"/><rect x="6.5" y=".6" width="1" height="1"/><rect x="6.5" y="22.1" width="1" height="1"/><rect x=".6" y="6.5" width="1" height="1"/><rect x="22.1" y="6.5" width="1" height="1"/><rect x="9.5" y=".6" width="1" height="1"/><rect x="9.5" y="22.1" width="1" height="1"/><rect x=".6" y="9.5" width="1" height="1"/><rect x="22.1" y="9.5" width="1" height="1"/><rect x="12.5" y=".6" width="1" height="1"/><rect x="12.5" y="22.1" width="1" height="1"/><rect x=".6" y="12.5" width="1" height="1"/><rect x="22.1" y="12.5" width="1" height="1"/><rect x="15.5" y=".6" width="1" height="1"/><rect x="15.5" y="22.1" width="1" height="1"/><rect x=".6" y="15.5" width="1" height="1"/><rect x="22.1" y="15.5" width="1" height="1"/><rect x="18.5" y=".6" width="1" height="1"/><rect x="18.5" y="22.1" width="1" height="1"/><rect x=".6" y="18.5" width="1" height="1"/><rect x="22.1" y="18.5" width="1" height="1"/></g><g fill="#50e868"><rect x=".2" y=".2" width="2" height="2"/><rect x="21.6" y=".2" width="2" height="2"/><rect x=".2" y="21.6" width="2" height="2"/><rect x="21.6" y="21.6" width="2" height="2"/></g><rect x="1.8" y="1.8" width="20.8" height="20.1" fill="#f0f0f0" stroke="#444" stroke-width=".6"/><g stroke-width="1.5"><path d="M4 4.2h17" stroke="#e83030"/><path d="M4 7.8h13" stroke="#e83030"/><path d="M4 10.9h10" stroke="#20b030"/><path d="M4 14.5h10" stroke="#20b030"/><path d="M4 18.1h13" stroke="#d0d020"/></g></svg>
<svg class="a" style="left:673px;top:64px" width="11" height="9"><path d="M1.5 1.5L4.5 4.5L1.5 7.5M6 1.5L9 4.5L6 7.5" fill="none" stroke="#000" stroke-width="1.9"/></svg>
<div class="a" style="left:304px;top:88px;width:382px;height:520px;background:#9db2c2"></div>
<div class="a" style="left:6px;top:89px;width:18px;height:63px;background:linear-gradient(90deg,#e8e6e3,#dcdad7);border:1px solid #8c8a86;border-radius:3px"></div>
<div class="t" style="left:8px;top:152px;width:63px;text-align:center;transform-origin:0 0;transform:rotate(-90deg)">Projects</div>
<div class="a" style="left:3px;top:151px;width:21px;height:62px;background:#e4e2df;border:1px solid #8c8a86;border-right:none;border-radius:3px 0 0 2px"></div>
<div class="t" style="left:7px;top:214px;width:62px;text-align:center;transform-origin:0 0;transform:rotate(-90deg)">Widgets</div>
<div class="a" style="left:3px;top:358px;width:21px;height:70px;background:#e4e2df;border:1px solid #8c8a86;border-right:none;border-radius:3px 0 0 2px"></div>
<div class="t" style="left:7px;top:429px;width:70px;text-align:center;transform-origin:0 0;transform:rotate(-90deg)">Attributes</div>
<div class="a" style="left:6px;top:428px;width:18px;height:49px;background:linear-gradient(90deg,#e8e6e3,#dcdad7);border:1px solid #8c8a86;border-radius:3px"></div>
<div class="t" style="left:8px;top:478px;width:49px;text-align:center;transform-origin:0 0;transform:rotate(-90deg)">Links</div>
<div class="a" style="left:27px;top:94px;width:3px;height:3px;background:linear-gradient(135deg,#a4a29e 45%,#fbfbfb 55%)"></div><div class="a" style="left:33px;top:94px;width:3px;height:3px;background:linear-gradient(135deg,#a4a29e 45%,#fbfbfb 55%)"></div><div class="a" style="left:39px;top:94px;width:3px;height:3px;background:linear-gradient(135deg,#a4a29e 45%,#fbfbfb 55%)"></div><div class="a" style="left:45px;top:94px;width:3px;height:3px;background:linear-gradient(135deg,#a4a29e 45%,#fbfbfb 55%)"></div><div class="a" style="left:51px;top:94px;width:3px;height:3px;background:linear-gradient(135deg,#a4a29e 45%,#fbfbfb 55%)"></div><div class="a" style="left:57px;top:94px;width:3px;height:3px;background:linear-gradient(135deg,#a4a29e 45%,#fbfbfb 55%)"></div><div class="a" style="left:63px;top:94px;width:3px;height:3px;background:linear-gradient(135deg,#a4a29e 45%,#fbfbfb 55%)"></div><div class="a" style="left:69px;top:94px;width:3px;height:3px;background:linear-gradient(135deg,#a4a29e 45%,#fbfbfb 55%)"></div><div class="a" style="left:75px;top:94px;width:3px;height:3px;background:linear-gradient(135deg,#a4a29e 45%,#fbfbfb 55%)"></div><div class="a" style="left:81px;top:94px;width:3px;height:3px;background:linear-gradient(135deg,#a4a29e 45%,#fbfbfb 55%)"></div><div class="a" style="left:87px;top:94px;width:3px;height:3px;background:linear-gradient(135deg,#a4a29e 45%,#fbfbfb 55%)"></div><div class="a" style="left:93px;top:94px;width:3px;height:3px;background:linear-gradient(135deg,#a4a29e 45%,#fbfbfb 55%)"></div><div class="a" style="left:99px;top:94px;width:3px;height:3px;background:linear-gradient(135deg,#a4a29e 45%,#fbfbfb 55%)"></div><div class="a" style="left:105px;top:94px;width:3px;height:3px;background:linear-gradient(135deg,#a4a29e 45%,#fbfbfb 55%)"></div><div class="a" style="left:111px;top:94px;width:3px;height:3px;background:linear-gradient(135deg,#a4a29e 45%,#fbfbfb 55%)"></div><div class="a" style="left:117px;top:94px;width:3px;height:3px;background:linear-gradient(135deg,#a4a29e 45%,#fbfbfb 55%)"></div><div class="a" style="left:30px;top:97px;width:3px;height:3px;background:linear-gradient(135deg,#a4a29e 45%,#fbfbfb 55%)"></div><div class="a" style="left:36px;top:97px;width:3px;height:3px;background:linear-gradient(135deg,#a4a29e 45%,#fbfbfb 55%)"></div><div class="a" style="left:42px;top:97px;width:3px;height:3px;background:linear-gradient(135deg,#a4a29e 45%,#fbfbfb 55%)"></div><div class="a" style="left:48px;top:97px;width:3px;height:3px;background:linear-gradient(135deg,#a4a29e 45%,#fbfbfb 55%)"></div><div class="a" style="left:54px;top:97px;width:3px;height:3px;background:linear-gradient(135deg,#a4a29e 45%,#fbfbfb 55%)"></div><div class="a" style="left:60px;top:97px;width:3px;height:3px;background:linear-gradient(135deg,#a4a29e 45%,#fbfbfb 55%)"></div><div class="a" style="left:66px;top:97px;width:3px;height:3px;background:linear-gradient(135deg,#a4a29e 45%,#fbfbfb 55%)"></div><div class="a" style="left:72px;top:97px;width:3px;height:3px;background:linear-gradient(135deg,#a4a29e 45%,#fbfbfb 55%)"></div><div class="a" style="left:78px;top:97px;width:3px;height:3px;background:linear-gradient(135deg,#a4a29e 45%,#fbfbfb 55%)"></div><div class="a" style="left:84px;top:97px;width:3px;height:3px;background:linear-gradient(135deg,#a4a29e 45%,#fbfbfb 55%)"></div><div class="a" style="left:90px;top:97px;width:3px;height:3px;background:linear-gradient(135deg,#a4a29e 45%,#fbfbfb 55%)"></div><div class="a" style="left:96px;top:97px;width:3px;height:3px;background:linear-gradient(135deg,#a4a29e 45%,#fbfbfb 55%)"></div><div class="a" style="left:102px;top:97px;width:3px;height:3px;background:linear-gradient(135deg,#a4a29e 45%,#fbfbfb 55%)"></div><div class="a" style="left:108px;top:97px;width:3px;height:3px;background:linear-gradient(135deg,#a4a29e 45%,#fbfbfb 55%)"></div><div class="a" style="left:114px;top:97px;width:3px;height:3px;background:linear-gradient(135deg,#a4a29e 45%,#fbfbfb 55%)"></div><div class="a" style="left:120px;top:97px;width:3px;height:3px;background:linear-gradient(135deg,#a4a29e 45%,#fbfbfb 55%)"></div>
<div class="t" style="left:128px;top:91px;font-size:10px;font-weight:bold;color:#1a1a1a">Widgets</div>
<div class="a" style="left:170px;top:94px;width:3px;height:3px;background:linear-gradient(135deg,#a4a29e 45%,#fbfbfb 55%)"></div><div class="a" style="left:176px;top:94px;width:3px;height:3px;background:linear-gradient(135deg,#a4a29e 45%,#fbfbfb 55%)"></div><div class="a" style="left:182px;top:94px;width:3px;height:3px;background:linear-gradient(135deg,#a4a29e 45%,#fbfbfb 55%)"></div><div class="a" style="left:188px;top:94px;width:3px;height:3px;background:linear-gradient(135deg,#a4a29e 45%,#fbfbfb 55%)"></div><div class="a" style="left:194px;top:94px;width:3px;height:3px;background:linear-gradient(135deg,#a4a29e 45%,#fbfbfb 55%)"></div><div class="a" style="left:200px;top:94px;width:3px;height:3px;background:linear-gradient(135deg,#a4a29e 45%,#fbfbfb 55%)"></div><div class="a" style="left:206px;top:94px;width:3px;height:3px;background:linear-gradient(135deg,#a4a29e 45%,#fbfbfb 55%)"></div><div class="a" style="left:212px;top:94px;width:3px;height:3px;background:linear-gradient(135deg,#a4a29e 45%,#fbfbfb 55%)"></div><div class="a" style="left:218px;top:94px;width:3px;height:3px;background:linear-gradient(135deg,#a4a29e 45%,#fbfbfb 55%)"></div><div class="a" style="left:224px;top:94px;width:3px;height:3px;background:linear-gradient(135deg,#a4a29e 45%,#fbfbfb 55%)"></div><div class="a" style="left:230px;top:94px;width:3px;height:3px;background:linear-gradient(135deg,#a4a29e 45%,#fbfbfb 55%)"></div><div class="a" style="left:236px;top:94px;width:3px;height:3px;background:linear-gradient(135deg,#a4a29e 45%,#fbfbfb 55%)"></div><div class="a" style="left:242px;top:94px;width:3px;height:3px;background:linear-gradient(135deg,#a4a29e 45%,#fbfbfb 55%)"></div><div class="a" style="left:248px;top:94px;width:3px;height:3px;background:linear-gradient(135deg,#a4a29e 45%,#fbfbfb 55%)"></div><div class="a" style="left:254px;top:94px;width:3px;height:3px;background:linear-gradient(135deg,#a4a29e 45%,#fbfbfb 55%)"></div><div class="a" style="left:260px;top:94px;width:3px;height:3px;background:linear-gradient(135deg,#a4a29e 45%,#fbfbfb 55%)"></div><div class="a" style="left:173px;top:97px;width:3px;height:3px;background:linear-gradient(135deg,#a4a29e 45%,#fbfbfb 55%)"></div><div class="a" style="left:179px;top:97px;width:3px;height:3px;background:linear-gradient(135deg,#a4a29e 45%,#fbfbfb 55%)"></div><div class="a" style="left:185px;top:97px;width:3px;height:3px;background:linear-gradient(135deg,#a4a29e 45%,#fbfbfb 55%)"></div><div class="a" style="left:191px;top:97px;width:3px;height:3px;background:linear-gradient(135deg,#a4a29e 45%,#fbfbfb 55%)"></div><div class="a" style="left:197px;top:97px;width:3px;height:3px;background:linear-gradient(135deg,#a4a29e 45%,#fbfbfb 55%)"></div><div class="a" style="left:203px;top:97px;width:3px;height:3px;background:linear-gradient(135deg,#a4a29e 45%,#fbfbfb 55%)"></div><div class="a" style="left:209px;top:97px;width:3px;height:3px;background:linear-gradient(135deg,#a4a29e 45%,#fbfbfb 55%)"></div><div class="a" style="left:215px;top:97px;width:3px;height:3px;background:linear-gradient(135deg,#a4a29e 45%,#fbfbfb 55%)"></div><div class="a" style="left:221px;top:97px;width:3px;height:3px;background:linear-gradient(135deg,#a4a29e 45%,#fbfbfb 55%)"></div><div class="a" style="left:227px;top:97px;width:3px;height:3px;background:linear-gradient(135deg,#a4a29e 45%,#fbfbfb 55%)"></div><div class="a" style="left:233px;top:97px;width:3px;height:3px;background:linear-gradient(135deg,#a4a29e 45%,#fbfbfb 55%)"></div><div class="a" style="left:239px;top:97px;width:3px;height:3px;background:linear-gradient(135deg,#a4a29e 45%,#fbfbfb 55%)"></div><div class="a" style="left:245px;top:97px;width:3px;height:3px;background:linear-gradient(135deg,#a4a29e 45%,#fbfbfb 55%)"></div><div class="a" style="left:251px;top:97px;width:3px;height:3px;background:linear-gradient(135deg,#a4a29e 45%,#fbfbfb 55%)"></div><div class="a" style="left:257px;top:97px;width:3px;height:3px;background:linear-gradient(135deg,#a4a29e 45%,#fbfbfb 55%)"></div><div class="a" style="left:263px;top:97px;width:3px;height:3px;background:linear-gradient(135deg,#a4a29e 45%,#fbfbfb 55%)"></div>
<div class="a" style="left:268px;top:90px;width:14px;height:14px;border:1px solid #8a8884;border-radius:3px;background:#e8e6e3"></div>
<div class="a" style="left:283px;top:90px;width:14px;height:14px;border:1px solid #8a8884;border-radius:3px;background:#e8e6e3"></div>
<svg class="a" style="left:271px;top:93px" width="9" height="9"><path d="M3 1h5v5M1.5 3.5h5v5h-5z" fill="none" stroke="#000" stroke-width="1.6"/></svg>
<svg class="a" style="left:286px;top:93px" width="9" height="9"><path d="M1 1l7 7M8 1L1 8" stroke="#000" stroke-width="1.5"/></svg>
<div class="a" style="left:25px;top:108px;width:273px;height:244px;border:2px solid #26268e;background:#fff;border-radius:2px"></div>
<div class="a" style="left:27px;top:110px;width:269px;height:22px;background:#e2e0dd"></div>
<div class="a" style="left:27px;top:110px;width:180px;height:22px;background:linear-gradient(#f2f1ef,#dddbd8);border:1px solid #8c8a86;border-radius:2px"></div>
<div class="a" style="left:206px;top:110px;width:61px;height:22px;background:linear-gradient(#f2f1ef,#dddbd8);border:1px solid #8c8a86;border-radius:2px"></div>
<div class="t" style="left:30px;top:114px;"><span style="letter-spacing:-0.4px">Name</span></div>
<div class="t" style="left:210px;top:114px;">Type</div>
<div class="a" style="left:36px;top:144px;width:1px;height:118px;background-image:linear-gradient(#8c8a86 50%,transparent 50%);background-size:1px 2px"></div>
<div class="a" style="left:27px;top:160px;width:240px;height:14px;background:#000080"></div>
<div class="a" style="left:32px;top:135px;width:9px;height:9px;border:1px solid #9a9894;border-radius:1px;background:linear-gradient(#fff,#eceae7)"></div>
<div class="a" style="left:34px;top:139px;width:5px;height:1px;background:#505050"></div>
<div class="a" style="left:36px;top:137px;width:1px;height:5px;background:#505050"></div>
<div class="a" style="left:42px;top:139px;width:6px;height:1px;background-image:linear-gradient(90deg,#8c8a86 50%,transparent 50%);background-size:2px 1px"></div>
<div class="t" style="left:49px;top:132px;">Documents</div>
<div class="t" style="left:210px;top:132px;">Library</div>
<div class="a" style="left:32px;top:149px;width:9px;height:9px;border:1px solid #9a9894;border-radius:1px;background:linear-gradient(#fff,#eceae7)"></div>
<div class="a" style="left:34px;top:153px;width:5px;height:1px;background:#505050"></div>
<div class="a" style="left:36px;top:151px;width:1px;height:5px;background:#505050"></div>
<div class="a" style="left:42px;top:153px;width:6px;height:1px;background-image:linear-gradient(90deg,#8c8a86 50%,transparent 50%);background-size:2px 1px"></div>
<div class="t" style="left:49px;top:146px;"><span style="letter-spacing:-0.22px">Mnemo elements</span></div>
<div class="t" style="left:210px;top:146px;">Library</div>
<div class="a" style="left:32px;top:163px;width:9px;height:9px;border:1px solid #9a9894;border-radius:1px;background:#e4e2df"></div>
<div class="a" style="left:34px;top:167px;width:5px;height:1px;background:#505050"></div>
<div class="a" style="left:42px;top:167px;width:6px;height:1px;background-image:linear-gradient(90deg,#8c8a86 50%,transparent 50%);background-size:2px 1px"></div>
<div class="t" style="left:49px;top:160px;color:#fff">KM 101</div>
<div class="t" style="left:210px;top:160px;color:#fff">Library</div>
<div class="a" style="left:47px;top:160px;width:160px;height:14px;border:1px dotted #ffe070"></div>
<div class="a" style="left:52px;top:177px;width:9px;height:9px;border:1px solid #9a9894;border-radius:1px;background:linear-gradient(#fff,#eceae7)"></div>
<div class="a" style="left:54px;top:181px;width:5px;height:1px;background:#505050"></div>
<div class="a" style="left:56px;top:179px;width:1px;height:5px;background:#505050"></div>
<div class="a" style="left:62px;top:181px;width:6px;height:1px;background-image:linear-gradient(90deg,#8c8a86 50%,transparent 50%);background-size:2px 1px"></div>
<div class="a" style="left:57px;top:186px;width:1px;height:12px;background-image:linear-gradient(#8c8a86 50%,transparent 50%);background-size:1px 2px"></div>
<div class="a" style="left:58px;top:198px;width:11px;height:1px;background-image:linear-gradient(90deg,#8c8a86 50%,transparent 50%);background-size:2px 1px"></div>
<svg class="a" style="left:70px;top:174px" width="16" height="16" viewBox="0 0 24 24"><rect x=".5" y=".5" width="23" height="23" fill="#d4d4d4" stroke="#8a8a8a" stroke-width="1"/><rect x="1" y="1" width="22" height="3" fill="#4aa0c0"/><path d="M3 14.5L7.3 5L11.5 14.5Z" fill="#20a040" stroke="#0c6020" stroke-width=".8"/><path d="M7.3 8L5.5 13H9Z" fill="#60d080"/><text x="14.5" y="13.5" font-family="Liberation Sans" font-weight="bold" font-style="italic" font-size="10" fill="#222">T</text><rect x="1.5" y="16" width="21" height="5.5" fill="#f0f0f0" stroke="#666" stroke-width=".5"/><text x="3" y="20.6" font-family="Liberation Sans" font-size="5" fill="#222">Value</text></svg>
<svg class="a" style="left:70px;top:190px" width="16" height="16" viewBox="0 0 24 24"><g fill="#2a2a2a"><rect x="3.5" y=".6" width="1" height="1"/><rect x="3.5" y="22.1" width="1" height="1"/><rect x=".6" y="3.5" width="1" height="1"/><rect x="22.1" y="3.5" width="1" height="1"/><rect x="6.5" y=".6" width="1" height="1"/><rect x="6.5" y="22.1" width="1" height="1"/><rect x=".6" y="6.5" width="1" height="1"/><rect x="22.1" y="6.5" width="1" height="1"/><rect x="9.5" y=".6" width="1" height="1"/><rect x="9.5" y="22.1" width="1" height="1"/><rect x=".6" y="9.5" width="1" height="1"/><rect x="22.1" y="9.5" width="1" height="1"/><rect x="12.5" y=".6" width="1" height="1"/><rect x="12.5" y="22.1" width="1" height="1"/><rect x=".6" y="12.5" width="1" height="1"/><rect x="22.1" y="12.5" width="1" height="1"/><rect x="15.5" y=".6" width="1" height="1"/><rect x="15.5" y="22.1" width="1" height="1"/><rect x=".6" y="15.5" width="1" height="1"/><rect x="22.1" y="15.5" width="1" height="1"/><rect x="18.5" y=".6" width="1" height="1"/><rect x="18.5" y="22.1" width="1" height="1"/><rect x=".6" y="18.5" width="1" height="1"/><rect x="22.1" y="18.5" width="1" height="1"/></g><g fill="#50e868"><rect x=".2" y=".2" width="2" height="2"/><rect x="21.6" y=".2" width="2" height="2"/><rect x=".2" y="21.6" width="2" height="2"/><rect x="21.6" y="21.6" width="2" height="2"/></g><defs><linearGradient id="ge9" x1="0" y1="0" x2="1" y2="0"><stop offset="0" stop-color="#e0f0f0"/><stop offset=".4" stop-color="#98b0b0"/><stop offset="1" stop-color="#d8e8e8"/></linearGradient></defs><path d="M8.5 4C4.5 5 2 9 2.5 12C3 16 5 19 6.6 20.2L13.3 20C13 16 15 13.5 20.5 12.4C17 9 12 5 8.5 4Z" fill="url(#ge9)" stroke="#111" stroke-width="1.3"/><g fill="#40e8f0"><circle cx="8.5" cy="4" r="1.2"/><circle cx="20.5" cy="12.4" r="1.2"/><circle cx="13.3" cy="20" r="1.2"/><circle cx="6.6" cy="20.2" r="1.2"/></g></svg>
<div class="a" style="left:32px;top:209px;width:9px;height:9px;border:1px solid #9a9894;border-radius:1px;background:linear-gradient(#fff,#eceae7)"></div>
<div class="a" style="left:34px;top:213px;width:5px;height:1px;background:#505050"></div>
<div class="a" style="left:36px;top:211px;width:1px;height:5px;background:#505050"></div>
<div class="a" style="left:42px;top:213px;width:6px;height:1px;background-image:linear-gradient(90deg,#8c8a86 50%,transparent 50%);background-size:2px 1px"></div>
<div class="t" style="left:49px;top:206px;">AGLKS</div>
<div class="a" style="left:32px;top:223px;width:9px;height:9px;border:1px solid #9a9894;border-radius:1px;background:linear-gradient(#fff,#eceae7)"></div>
<div class="a" style="left:34px;top:227px;width:5px;height:1px;background:#505050"></div>
<div class="a" style="left:36px;top:225px;width:1px;height:5px;background:#505050"></div>
<div class="a" style="left:42px;top:227px;width:6px;height:1px;background-image:linear-gradient(90deg,#8c8a86 50%,transparent 50%);background-size:2px 1px"></div>
<div class="t" style="left:49px;top:220px;">Main elements</div>
<div class="a" style="left:32px;top:238px;width:9px;height:9px;border:1px solid #9a9894;border-radius:1px;background:linear-gradient(#fff,#eceae7)"></div>
<div class="a" style="left:34px;top:242px;width:5px;height:1px;background:#505050"></div>
<div class="a" style="left:36px;top:240px;width:1px;height:5px;background:#505050"></div>
<div class="a" style="left:42px;top:242px;width:6px;height:1px;background-image:linear-gradient(90deg,#8c8a86 50%,transparent 50%);background-size:2px 1px"></div>
<svg class="a" style="left:50px;top:234px" width="16" height="16" viewBox="0 0 24 24"><defs><radialGradient id="gq10" cx=".4" cy=".3" r=".7"><stop offset="0" stop-color="#a8d0ff"/><stop offset=".6" stop-color="#4a90f0"/><stop offset="1" stop-color="#2060d0"/></radialGradient></defs><circle cx="12" cy="12" r="11" fill="url(#gq10)" stroke="#3070d0" stroke-width=".8"/><text x="12" y="19" text-anchor="middle" font-family="Liberation Sans" font-weight="bold" font-size="17" fill="#fff">?</text></svg>
<div class="t" style="left:71px;top:235px;">Test</div>
<div class="a" style="left:32px;top:254px;width:9px;height:9px;border:1px solid #9a9894;border-radius:1px;background:linear-gradient(#fff,#eceae7)"></div>
<div class="a" style="left:34px;top:258px;width:5px;height:1px;background:#505050"></div>
<div class="a" style="left:36px;top:256px;width:1px;height:5px;background:#505050"></div>
<div class="a" style="left:42px;top:258px;width:6px;height:1px;background-image:linear-gradient(90deg,#8c8a86 50%,transparent 50%);background-size:2px 1px"></div>
<svg class="a" style="left:50px;top:250px" width="16" height="16" viewBox="0 0 24 24"><defs><linearGradient id="gl11" x1="0" y1="0" x2="1" y2="1"><stop offset="0" stop-color="#d8eef4"/><stop offset=".5" stop-color="#a8d0dc"/><stop offset="1" stop-color="#84b4c4"/></linearGradient></defs><path d="M1.5 5L5 1.5H22.5V19L19 22.5H1.5Z" fill="url(#gl11)"/><g fill="none" stroke="#5a7a84" stroke-width=".8" stroke-dasharray="2 1.5"><path d="M5 1.5V19H22.5M5 19L1.5 22.5"/></g><g fill="none" stroke="#1a1a1a" stroke-width="1.6" stroke-dasharray="2.2 1.5"><path d="M1.5 5L5 1.5H22.5V19L19 22.5H1.5Z"/><path d="M1.5 5H19V22.5M19 5L22.5 1.5"/></g><path d="M0.5 0.5l4.5 4M19.5 0.5l4 3.5M0.5 19.5l4.5 4M20 20.5l4 3" stroke="#10e030" stroke-width="1.9"/><path d="M13.80 16.20 L23.20 15.10 L23.80 14.50 L23.20 13.90 L13.80 12.80ZM12.60 15.70 L19.03 20.58 L19.88 20.58 L19.88 19.73 L15.00 13.30ZM12.10 14.50 L13.20 23.90 L13.80 24.50 L14.40 23.90 L15.50 14.50ZM12.60 13.30 L7.72 19.73 L7.72 20.58 L8.57 20.58 L15.00 15.70ZM13.80 12.80 L4.40 13.90 L3.80 14.50 L4.40 15.10 L13.80 16.20ZM15.00 13.30 L8.57 8.42 L7.72 8.42 L7.72 9.27 L12.60 15.70ZM15.50 14.50 L14.40 5.10 L13.80 4.50 L13.20 5.10 L12.10 14.50ZM15.00 15.70 L19.88 9.27 L19.88 8.42 L19.03 8.42 L12.60 13.30Z" fill="#ffcc00" stroke="#d08800" stroke-width=".7" stroke-linejoin="round"/><circle cx="13.8" cy="14.5" r="2.4" fill="#ffee40"/><circle cx="13.8" cy="14.5" r="1.3" fill="#ffffa0"/></svg>
<div class="t" style="left:71px;top:251px;">Originals</div>
<div class="a" style="left:300px;top:261px;width:3px;height:3px;background:linear-gradient(135deg,#a4a29e 45%,#fbfbfb 55%)"></div>
<div class="a" style="left:300px;top:266px;width:3px;height:3px;background:linear-gradient(135deg,#a4a29e 45%,#fbfbfb 55%)"></div>
<div class="a" style="left:300px;top:271px;width:3px;height:3px;background:linear-gradient(135deg,#a4a29e 45%,#fbfbfb 55%)"></div>
<div class="a" style="left:300px;top:276px;width:3px;height:3px;background:linear-gradient(135deg,#a4a29e 45%,#fbfbfb 55%)"></div>
<div class="a" style="left:300px;top:281px;width:3px;height:3px;background:linear-gradient(135deg,#a4a29e 45%,#fbfbfb 55%)"></div>
<div class="a" style="left:300px;top:286px;width:3px;height:3px;background:linear-gradient(135deg,#a4a29e 45%,#fbfbfb 55%)"></div>
<div class="a" style="left:300px;top:291px;width:3px;height:3px;background:linear-gradient(135deg,#a4a29e 45%,#fbfbfb 55%)"></div>
<div class="a" style="left:300px;top:296px;width:3px;height:3px;background:linear-gradient(135deg,#a4a29e 45%,#fbfbfb 55%)"></div>
<div class="a" style="left:300px;top:301px;width:3px;height:3px;background:linear-gradient(135deg,#a4a29e 45%,#fbfbfb 55%)"></div>
<div class="a" style="left:300px;top:306px;width:3px;height:3px;background:linear-gradient(135deg,#a4a29e 45%,#fbfbfb 55%)"></div>
<div class="a" style="left:300px;top:311px;width:3px;height:3px;background:linear-gradient(135deg,#a4a29e 45%,#fbfbfb 55%)"></div>
<div class="a" style="left:300px;top:316px;width:3px;height:3px;background:linear-gradient(135deg,#a4a29e 45%,#fbfbfb 55%)"></div>
<div class="a" style="left:300px;top:321px;width:3px;height:3px;background:linear-gradient(135deg,#a4a29e 45%,#fbfbfb 55%)"></div>
<div class="a" style="left:300px;top:326px;width:3px;height:3px;background:linear-gradient(135deg,#a4a29e 45%,#fbfbfb 55%)"></div>
<div class="a" style="left:300px;top:331px;width:3px;height:3px;background:linear-gradient(135deg,#a4a29e 45%,#fbfbfb 55%)"></div>
<div class="a" style="left:300px;top:336px;width:3px;height:3px;background:linear-gradient(135deg,#a4a29e 45%,#fbfbfb 55%)"></div>
<div class="a" style="left:300px;top:341px;width:3px;height:3px;background:linear-gradient(135deg,#a4a29e 45%,#fbfbfb 55%)"></div>
<div class="a" style="left:300px;top:346px;width:3px;height:3px;background:linear-gradient(135deg,#a4a29e 45%,#fbfbfb 55%)"></div>
<div class="a" style="left:300px;top:351px;width:3px;height:3px;background:linear-gradient(135deg,#a4a29e 45%,#fbfbfb 55%)"></div>
<div class="a" style="left:300px;top:356px;width:3px;height:3px;background:linear-gradient(135deg,#a4a29e 45%,#fbfbfb 55%)"></div>
<div class="a" style="left:300px;top:361px;width:3px;height:3px;background:linear-gradient(135deg,#a4a29e 45%,#fbfbfb 55%)"></div>
<div class="a" style="left:300px;top:366px;width:3px;height:3px;background:linear-gradient(135deg,#a4a29e 45%,#fbfbfb 55%)"></div>
<div class="a" style="left:300px;top:371px;width:3px;height:3px;background:linear-gradient(135deg,#a4a29e 45%,#fbfbfb 55%)"></div>
<div class="a" style="left:300px;top:376px;width:3px;height:3px;background:linear-gradient(135deg,#a4a29e 45%,#fbfbfb 55%)"></div>
<div class="a" style="left:300px;top:381px;width:3px;height:3px;background:linear-gradient(135deg,#a4a29e 45%,#fbfbfb 55%)"></div>
<div class="a" style="left:300px;top:386px;width:3px;height:3px;background:linear-gradient(135deg,#a4a29e 45%,#fbfbfb 55%)"></div>
<div class="a" style="left:300px;top:391px;width:3px;height:3px;background:linear-gradient(135deg,#a4a29e 45%,#fbfbfb 55%)"></div>
<div class="a" style="left:300px;top:396px;width:3px;height:3px;background:linear-gradient(135deg,#a4a29e 45%,#fbfbfb 55%)"></div>
<div class="a" style="left:300px;top:401px;width:3px;height:3px;background:linear-gradient(135deg,#a4a29e 45%,#fbfbfb 55%)"></div>
<div class="a" style="left:300px;top:406px;width:3px;height:3px;background:linear-gradient(135deg,#a4a29e 45%,#fbfbfb 55%)"></div>
<div class="a" style="left:300px;top:411px;width:3px;height:3px;background:linear-gradient(135deg,#a4a29e 45%,#fbfbfb 55%)"></div>
<div class="a" style="left:300px;top:416px;width:3px;height:3px;background:linear-gradient(135deg,#a4a29e 45%,#fbfbfb 55%)"></div>
<div class="a" style="left:300px;top:421px;width:3px;height:3px;background:linear-gradient(135deg,#a4a29e 45%,#fbfbfb 55%)"></div>
<div class="a" style="left:300px;top:426px;width:3px;height:3px;background:linear-gradient(135deg,#a4a29e 45%,#fbfbfb 55%)"></div>
<div class="a" style="left:300px;top:431px;width:3px;height:3px;background:linear-gradient(135deg,#a4a29e 45%,#fbfbfb 55%)"></div>
<div class="a" style="left:300px;top:436px;width:3px;height:3px;background:linear-gradient(135deg,#a4a29e 45%,#fbfbfb 55%)"></div>
<div class="a" style="left:300px;top:441px;width:3px;height:3px;background:linear-gradient(135deg,#a4a29e 45%,#fbfbfb 55%)"></div>
<div class="a" style="left:300px;top:446px;width:3px;height:3px;background:linear-gradient(135deg,#a4a29e 45%,#fbfbfb 55%)"></div>
<div class="a" style="left:300px;top:451px;width:3px;height:3px;background:linear-gradient(135deg,#a4a29e 45%,#fbfbfb 55%)"></div>
<div class="a" style="left:300px;top:456px;width:3px;height:3px;background:linear-gradient(135deg,#a4a29e 45%,#fbfbfb 55%)"></div>
<div class="a" style="left:300px;top:461px;width:3px;height:3px;background:linear-gradient(135deg,#a4a29e 45%,#fbfbfb 55%)"></div>
<div class="a" style="left:300px;top:466px;width:3px;height:3px;background:linear-gradient(135deg,#a4a29e 45%,#fbfbfb 55%)"></div>
<div class="a" style="left:300px;top:471px;width:3px;height:3px;background:linear-gradient(135deg,#a4a29e 45%,#fbfbfb 55%)"></div>
<div class="a" style="left:300px;top:476px;width:3px;height:3px;background:linear-gradient(135deg,#a4a29e 45%,#fbfbfb 55%)"></div>
<div class="a" style="left:300px;top:481px;width:3px;height:3px;background:linear-gradient(135deg,#a4a29e 45%,#fbfbfb 55%)"></div>
<div class="a" style="left:300px;top:486px;width:3px;height:3px;background:linear-gradient(135deg,#a4a29e 45%,#fbfbfb 55%)"></div>
<div class="a" style="left:300px;top:491px;width:3px;height:3px;background:linear-gradient(135deg,#a4a29e 45%,#fbfbfb 55%)"></div>
<div class="a" style="left:300px;top:496px;width:3px;height:3px;background:linear-gradient(135deg,#a4a29e 45%,#fbfbfb 55%)"></div>
<div class="a" style="left:300px;top:501px;width:3px;height:3px;background:linear-gradient(135deg,#a4a29e 45%,#fbfbfb 55%)"></div>
<div class="a" style="left:300px;top:506px;width:3px;height:3px;background:linear-gradient(135deg,#a4a29e 45%,#fbfbfb 55%)"></div>
<div class="a" style="left:300px;top:511px;width:3px;height:3px;background:linear-gradient(135deg,#a4a29e 45%,#fbfbfb 55%)"></div>
<div class="a" style="left:300px;top:516px;width:3px;height:3px;background:linear-gradient(135deg,#a4a29e 45%,#fbfbfb 55%)"></div>
<div class="a" style="left:300px;top:521px;width:3px;height:3px;background:linear-gradient(135deg,#a4a29e 45%,#fbfbfb 55%)"></div>
<div class="a" style="left:300px;top:526px;width:3px;height:3px;background:linear-gradient(135deg,#a4a29e 45%,#fbfbfb 55%)"></div>
<div class="a" style="left:300px;top:531px;width:3px;height:3px;background:linear-gradient(135deg,#a4a29e 45%,#fbfbfb 55%)"></div>
<div class="a" style="left:300px;top:536px;width:3px;height:3px;background:linear-gradient(135deg,#a4a29e 45%,#fbfbfb 55%)"></div>
<div class="a" style="left:300px;top:541px;width:3px;height:3px;background:linear-gradient(135deg,#a4a29e 45%,#fbfbfb 55%)"></div>
<div class="a" style="left:300px;top:546px;width:3px;height:3px;background:linear-gradient(135deg,#a4a29e 45%,#fbfbfb 55%)"></div>
<div class="a" style="left:300px;top:551px;width:3px;height:3px;background:linear-gradient(135deg,#a4a29e 45%,#fbfbfb 55%)"></div>
<div class="a" style="left:300px;top:556px;width:3px;height:3px;background:linear-gradient(135deg,#a4a29e 45%,#fbfbfb 55%)"></div>
<div class="a" style="left:300px;top:561px;width:3px;height:3px;background:linear-gradient(135deg,#a4a29e 45%,#fbfbfb 55%)"></div>
<div class="a" style="left:300px;top:566px;width:3px;height:3px;background:linear-gradient(135deg,#a4a29e 45%,#fbfbfb 55%)"></div>
<div class="a" style="left:300px;top:571px;width:3px;height:3px;background:linear-gradient(135deg,#a4a29e 45%,#fbfbfb 55%)"></div>
<div class="a" style="left:300px;top:576px;width:3px;height:3px;background:linear-gradient(135deg,#a4a29e 45%,#fbfbfb 55%)"></div>
<div class="a" style="left:300px;top:581px;width:3px;height:3px;background:linear-gradient(135deg,#a4a29e 45%,#fbfbfb 55%)"></div>
<div class="a" style="left:300px;top:586px;width:3px;height:3px;background:linear-gradient(135deg,#a4a29e 45%,#fbfbfb 55%)"></div>
<div class="a" style="left:300px;top:591px;width:3px;height:3px;background:linear-gradient(135deg,#a4a29e 45%,#fbfbfb 55%)"></div>
<div class="a" style="left:300px;top:596px;width:3px;height:3px;background:linear-gradient(135deg,#a4a29e 45%,#fbfbfb 55%)"></div>
<div class="a" style="left:27px;top:364px;width:3px;height:3px;background:linear-gradient(135deg,#a4a29e 45%,#fbfbfb 55%)"></div><div class="a" style="left:33px;top:364px;width:3px;height:3px;background:linear-gradient(135deg,#a4a29e 45%,#fbfbfb 55%)"></div><div class="a" style="left:39px;top:364px;width:3px;height:3px;background:linear-gradient(135deg,#a4a29e 45%,#fbfbfb 55%)"></div><div class="a" style="left:45px;top:364px;width:3px;height:3px;background:linear-gradient(135deg,#a4a29e 45%,#fbfbfb 55%)"></div><div class="a" style="left:51px;top:364px;width:3px;height:3px;background:linear-gradient(135deg,#a4a29e 45%,#fbfbfb 55%)"></div><div class="a" style="left:57px;top:364px;width:3px;height:3px;background:linear-gradient(135deg,#a4a29e 45%,#fbfbfb 55%)"></div><div class="a" style="left:63px;top:364px;width:3px;height:3px;background:linear-gradient(135deg,#a4a29e 45%,#fbfbfb 55%)"></div><div class="a" style="left:69px;top:364px;width:3px;height:3px;background:linear-gradient(135deg,#a4a29e 45%,#fbfbfb 55%)"></div><div class="a" style="left:75px;top:364px;width:3px;height:3px;background:linear-gradient(135deg,#a4a29e 45%,#fbfbfb 55%)"></div><div class="a" style="left:81px;top:364px;width:3px;height:3px;background:linear-gradient(135deg,#a4a29e 45%,#fbfbfb 55%)"></div><div class="a" style="left:87px;top:364px;width:3px;height:3px;background:linear-gradient(135deg,#a4a29e 45%,#fbfbfb 55%)"></div><div class="a" style="left:93px;top:364px;width:3px;height:3px;background:linear-gradient(135deg,#a4a29e 45%,#fbfbfb 55%)"></div><div class="a" style="left:99px;top:364px;width:3px;height:3px;background:linear-gradient(135deg,#a4a29e 45%,#fbfbfb 55%)"></div><div class="a" style="left:105px;top:364px;width:3px;height:3px;background:linear-gradient(135deg,#a4a29e 45%,#fbfbfb 55%)"></div><div class="a" style="left:111px;top:364px;width:3px;height:3px;background:linear-gradient(135deg,#a4a29e 45%,#fbfbfb 55%)"></div><div class="a" style="left:117px;top:364px;width:3px;height:3px;background:linear-gradient(135deg,#a4a29e 45%,#fbfbfb 55%)"></div><div class="a" style="left:123px;top:364px;width:3px;height:3px;background:linear-gradient(135deg,#a4a29e 45%,#fbfbfb 55%)"></div><div class="a" style="left:129px;top:364px;width:3px;height:3px;background:linear-gradient(135deg,#a4a29e 45%,#fbfbfb 55%)"></div><div class="a" style="left:135px;top:364px;width:3px;height:3px;background:linear-gradient(135deg,#a4a29e 45%,#fbfbfb 55%)"></div><div class="a" style="left:141px;top:364px;width:3px;height:3px;background:linear-gradient(135deg,#a4a29e 45%,#fbfbfb 55%)"></div><div class="a" style="left:30px;top:367px;width:3px;height:3px;background:linear-gradient(135deg,#a4a29e 45%,#fbfbfb 55%)"></div><div class="a" style="left:36px;top:367px;width:3px;height:3px;background:linear-gradient(135deg,#a4a29e 45%,#fbfbfb 55%)"></div><div class="a" style="left:42px;top:367px;width:3px;height:3px;background:linear-gradient(135deg,#a4a29e 45%,#fbfbfb 55%)"></div><div class="a" style="left:48px;top:367px;width:3px;height:3px;background:linear-gradient(135deg,#a4a29e 45%,#fbfbfb 55%)"></div><div class="a" style="left:54px;top:367px;width:3px;height:3px;background:linear-gradient(135deg,#a4a29e 45%,#fbfbfb 55%)"></div><div class="a" style="left:60px;top:367px;width:3px;height:3px;background:linear-gradient(135deg,#a4a29e 45%,#fbfbfb 55%)"></div><div class="a" style="left:66px;top:367px;width:3px;height:3px;background:linear-gradient(135deg,#a4a29e 45%,#fbfbfb 55%)"></div><div class="a" style="left:72px;top:367px;width:3px;height:3px;background:linear-gradient(135deg,#a4a29e 45%,#fbfbfb 55%)"></div><div class="a" style="left:78px;top:367px;width:3px;height:3px;background:linear-gradient(135deg,#a4a29e 45%,#fbfbfb 55%)"></div><div class="a" style="left:84px;top:367px;width:3px;height:3px;background:linear-gradient(135deg,#a4a29e 45%,#fbfbfb 55%)"></div><div class="a" style="left:90px;top:367px;width:3px;height:3px;background:linear-gradient(135deg,#a4a29e 45%,#fbfbfb 55%)"></div><div class="a" style="left:96px;top:367px;width:3px;height:3px;background:linear-gradient(135deg,#a4a29e 45%,#fbfbfb 55%)"></div><div class="a" style="left:102px;top:367px;width:3px;height:3px;background:linear-gradient(135deg,#a4a29e 45%,#fbfbfb 55%)"></div><div class="a" style="left:108px;top:367px;width:3px;height:3px;background:linear-gradient(135deg,#a4a29e 45%,#fbfbfb 55%)"></div><div class="a" style="left:114px;top:367px;width:3px;height:3px;background:linear-gradient(135deg,#a4a29e 45%,#fbfbfb 55%)"></div><div class="a" style="left:120px;top:367px;width:3px;height:3px;background:linear-gradient(135deg,#a4a29e 45%,#fbfbfb 55%)"></div><div class="a" style="left:126px;top:367px;width:3px;height:3px;background:linear-gradient(135deg,#a4a29e 45%,#fbfbfb 55%)"></div><div class="a" style="left:132px;top:367px;width:3px;height:3px;background:linear-gradient(135deg,#a4a29e 45%,#fbfbfb 55%)"></div><div class="a" style="left:138px;top:367px;width:3px;height:3px;background:linear-gradient(135deg,#a4a29e 45%,#fbfbfb 55%)"></div><div class="a" style="left:144px;top:367px;width:3px;height:3px;background:linear-gradient(135deg,#a4a29e 45%,#fbfbfb 55%)"></div>
<div class="a" style="left:283px;top:360px;width:14px;height:14px;border:1px solid #8a8884;border-radius:3px;background:#e8e6e3"></div>
<svg class="a" style="left:286px;top:363px" width="9" height="9"><path d="M1 1l7 7M8 1L1 8" stroke="#000" stroke-width="1.5"/></svg>
<div class="a" style="left:25px;top:378px;width:273px;height:230px;border:1px solid #858380;box-shadow:inset 1px 1px 0 #aeaca8;background:#fff;border-radius:3px"></div>
<div class="a" style="left:26px;top:379px;width:271px;height:24px;background:#e2e0dd"></div>
<div class="a" style="left:26px;top:380px;width:270px;height:22px;background:linear-gradient(#f2f1ef,#dddbd8);border:1px solid #8c8a86;border-radius:2px"></div>
<div class="t" style="left:31px;top:384px;">Attribute</div>
<div class="t" style="left:9px;top:610px;">Press to add widget based at '/wlb_originals/wdg_Box'.</div>
<div class="a" style="left:542px;top:610px;width:32px;height:16px;border:1px solid #8c8a86;border-radius:2px"></div>
<div class="t" style="left:542px;top:611px;width:32px;text-align:center;color:#000;font-size:11px">100%</div>
<div class="a" style="left:576px;top:610px;width:8px;height:16px;border:1px solid #8c8a86;border-radius:2px"></div>
<div class="t" style="left:576px;top:611px;width:8px;text-align:center;color:#000;font-size:11px">*</div>
<div class="a" style="left:586px;top:610px;width:37px;height:16px;border:1px solid #8c8a86;border-radius:2px"></div>
<div class="t" style="left:586px;top:611px;width:37px;text-align:center;color:#000;font-size:11px">Resize</div>
<div class="a" style="left:625px;top:610px;width:7px;height:16px;border:1px solid #8c8a86;border-radius:2px"></div>
<div class="t" style="left:625px;top:611px;width:7px;text-align:center;color:#000;font-size:11px">.</div>
<div class="a" style="left:634px;top:610px;width:34px;height:16px;border:1px solid #8c8a86;border-radius:2px"></div>
<div class="t" style="left:634px;top:611px;width:34px;text-align:center;color:#088c08;font-size:11px">roman</div>
<svg class="a" style="left:672px;top:612px" width="14" height="15"><path d="M14 1L0 15M14 5L4 15M14 9L8 15M14 13L12 15" stroke="#8e8c88" stroke-width="1.2"/><path d="M14 2.5L1.5 15M14 6.5L5.5 15M14 10.5L9.5 15" stroke="#fff" stroke-width="1"/></svg>
<div class="a" style="left:87px;top:167px;width:201px;height:418px;background:#e6e4e1;border:1px solid #8c8a86"></div>
<svg class="a" style="left:90px;top:171px" width="16" height="16" viewBox="0 0 24 24"><defs><linearGradient id="gl12" x1="0" y1="0" x2="1" y2="1"><stop offset="0" stop-color="#d8eef4"/><stop offset=".5" stop-color="#a8d0dc"/><stop offset="1" stop-color="#84b4c4"/></linearGradient></defs><path d="M1.5 5L5 1.5H22.5V19L19 22.5H1.5Z" fill="url(#gl12)"/><g fill="none" stroke="#5a7a84" stroke-width=".8" stroke-dasharray="2 1.5"><path d="M5 1.5V19H22.5M5 19L1.5 22.5"/></g><g fill="none" stroke="#1a1a1a" stroke-width="1.6" stroke-dasharray="2.2 1.5"><path d="M1.5 5L5 1.5H22.5V19L19 22.5H1.5Z"/><path d="M1.5 5H19V22.5M19 5L22.5 1.5"/></g><path d="M0.5 0.5l4.5 4M19.5 0.5l4 3.5M0.5 19.5l4.5 4M20 20.5l4 3" stroke="#10e030" stroke-width="1.9"/><path d="M13.80 16.20 L23.20 15.10 L23.80 14.50 L23.20 13.90 L13.80 12.80ZM12.60 15.70 L19.03 20.58 L19.88 20.58 L19.88 19.73 L15.00 13.30ZM12.10 14.50 L13.20 23.90 L13.80 24.50 L14.40 23.90 L15.50 14.50ZM12.60 13.30 L7.72 19.73 L7.72 20.58 L8.57 20.58 L15.00 15.70ZM13.80 12.80 L4.40 13.90 L3.80 14.50 L4.40 15.10 L13.80 16.20ZM15.00 13.30 L8.57 8.42 L7.72 8.42 L7.72 9.27 L12.60 15.70ZM15.50 14.50 L14.40 5.10 L13.80 4.50 L13.20 5.10 L12.10 14.50ZM15.00 15.70 L19.88 9.27 L19.88 8.42 L19.03 8.42 L12.60 13.30Z" fill="#ffcc00" stroke="#d08800" stroke-width=".7" stroke-linejoin="round"/><circle cx="13.8" cy="14.5" r="2.4" fill="#ffee40"/><circle cx="13.8" cy="14.5" r="1.3" fill="#ffffa0"/></svg>
<div class="t " style="left:112px;top:172px;letter-spacing:-0.1px">New library</div>
<svg class="a" style="left:90px;top:193px" width="16" height="16" viewBox="0 0 24 24"><defs><linearGradient id="gb13" x1="0" y1="0" x2="1" y2="1"><stop offset="0" stop-color="#c4deff"/><stop offset="1" stop-color="#84b2ec"/></linearGradient></defs><rect x="1" y="1" width="21" height="19.5" rx="2" fill="url(#gb13)" stroke="#2e3c50" stroke-width="1.3"/><rect x="13" y="3" width="2.5" height="6" fill="#7890b0" opacity=".6"/><rect x="3" y="3" width="10" height="5" rx=".5" fill="#060606"/><rect x="4" y="4.3" width="8" height="2.4" fill="#1ea01e"/><path d="M4.5 4.3v2.4M7 4.3v2.4M9.5 4.3v2.4" stroke="#063" stroke-width=".5"/><path d="M8 8v4M6.3 12h3.4" stroke="#444" stroke-width=".9"/><path d="M1.5 14h20" stroke="#e2e27a" stroke-width="1.8"/><path d="M1.5 16h20" stroke="#b4d0f0" stroke-width=".8"/><path d="M16.3 9.5v15M8.8 17h15" stroke="#0a5a20" stroke-width="3.6"/><path d="M16.3 10v14M9.3 17h14" stroke="#18b040" stroke-width="2.2"/></svg>
<div class="t " style="left:112px;top:194px;letter-spacing:-0.1px">Add visual item</div>
<div class="t " style="left:241px;top:194px;letter-spacing:-0.1px">Ctrl+I</div>
<svg class="a" style="left:90px;top:215px" width="16" height="16" viewBox="0 0 24 24"><defs><linearGradient id="gb14" x1="0" y1="0" x2="1" y2="1"><stop offset="0" stop-color="#c4deff"/><stop offset="1" stop-color="#84b2ec"/></linearGradient></defs><rect x="1" y="1" width="21" height="19.5" rx="2" fill="url(#gb14)" stroke="#2e3c50" stroke-width="1.3"/><rect x="13" y="3" width="2.5" height="6" fill="#7890b0" opacity=".6"/><rect x="3" y="3" width="10" height="5" rx=".5" fill="#060606"/><rect x="4" y="4.3" width="8" height="2.4" fill="#1ea01e"/><path d="M4.5 4.3v2.4M7 4.3v2.4M9.5 4.3v2.4" stroke="#063" stroke-width=".5"/><path d="M8 8v4M6.3 12h3.4" stroke="#444" stroke-width=".9"/><path d="M1.5 14h20" stroke="#e2e27a" stroke-width="1.8"/><path d="M1.5 16h20" stroke="#b4d0f0" stroke-width=".8"/><path d="M9 10l14 13M23 10L9 23" stroke="#ff1818" stroke-width="2.6" stroke-linecap="round"/></svg>
<div class="t " style="left:112px;top:216px;letter-spacing:-0.1px">Delete visual item</div>
<div class="t " style="left:241px;top:216px;letter-spacing:-0.1px">Ctrl+D</div>
<svg class="a" style="left:90px;top:237px" width="16" height="16" viewBox="0 0 24 24"><rect x="1" y="1" width="21" height="19.5" rx="2" fill="#dadada" stroke="#8a8a8a" stroke-width="1.3"/><rect x="3" y="3" width="10" height="5" fill="#7a7a7a"/><rect x="4" y="4.2" width="8" height="2.6" fill="#a4a4a4"/><path d="M1.5 14h20" stroke="#c4c4c4" stroke-width="1.6"/><path d="M8 8v4M6.5 12h3" stroke="#9a9a9a" stroke-width=".8"/><path d="M11 13h9v7h-9z" fill="#d0d0d0" stroke="#9a9a9a"/><path d="M13 16h5" stroke="#9a9a9a"/></svg>
<div class="t dis" style="left:112px;top:238px;letter-spacing:-0.1px">Visual item changes clear</div>
<svg class="a" style="left:90px;top:259px" width="16" height="16" viewBox="0 0 24 24"><defs><linearGradient id="gb16" x1="0" y1="0" x2="1" y2="1"><stop offset="0" stop-color="#c4deff"/><stop offset="1" stop-color="#84b2ec"/></linearGradient></defs><rect x="1" y="1" width="21" height="19.5" rx="2" fill="url(#gb16)" stroke="#2e3c50" stroke-width="1.3"/><rect x="13" y="3" width="2.5" height="6" fill="#7890b0" opacity=".6"/><rect x="3" y="3" width="10" height="5" rx=".5" fill="#060606"/><rect x="4" y="4.3" width="8" height="2.4" fill="#1ea01e"/><path d="M4.5 4.3v2.4M7 4.3v2.4M9.5 4.3v2.4" stroke="#063" stroke-width=".5"/><path d="M8 8v4M6.3 12h3.4" stroke="#444" stroke-width=".9"/><path d="M1.5 14h20" stroke="#e2e27a" stroke-width="1.8"/><path d="M1.5 16h20" stroke="#b4d0f0" stroke-width=".8"/><path d="M12 13l10 9" stroke="#3a3a3a" stroke-width="4.2" stroke-linecap="round"/><path d="M12 13l10 9" stroke="#a8a8a8" stroke-width="2.6" stroke-linecap="round"/><circle cx="11" cy="12" r="4" fill="#b8b8b8" stroke="#3a3a3a" stroke-width="1"/><path d="M9.5 9.2l3.2 3.4" stroke="#6a90c0" stroke-width="2.4"/></svg>
<div class="t " style="left:112px;top:260px;letter-spacing:-0.1px">Visual item properties</div>
<div class="t " style="left:241px;top:260px;letter-spacing:-0.1px">Ctrl+P</div>
<svg class="a" style="left:90px;top:281px" width="16" height="16" viewBox="0 0 24 24"><rect x="1" y="1" width="21" height="19.5" rx="2" fill="#dadada" stroke="#8a8a8a" stroke-width="1.3"/><rect x="3" y="3" width="10" height="5" fill="#7a7a7a"/><rect x="4" y="4.2" width="8" height="2.6" fill="#a4a4a4"/><path d="M1.5 14h20" stroke="#c4c4c4" stroke-width="1.6"/><path d="M8 8v4M6.5 12h3" stroke="#9a9a9a" stroke-width=".8"/><path d="M10 17L21.5 4" stroke="#8a8a8a" stroke-width="4.2" stroke-linecap="round"/><path d="M10 17L21.5 4" stroke="#e4e4e4" stroke-width="2.6" stroke-linecap="round"/><path d="M8 14l3 4M12 17l3-2 3 3" stroke="#8a8a8a" fill="none" stroke-width="1"/></svg>
<div class="t dis" style="left:112px;top:282px;letter-spacing:-0.1px">Visual item edit</div>
<div class="t dis" style="left:241px;top:282px;letter-spacing:-0.1px">Ctrl+E</div>
<div class="a" style="left:93px;top:300px;width:189px;height:1px;background:#aaa8a4"></div>
<div class="t " style="left:112px;top:305px;letter-spacing:-0.1px">Library: doc</div>
<div class="a" style="left:273px;top:308px;width:0;height:0;border-left:4px solid #000;border-top:4px solid transparent;border-bottom:4px solid transparent"></div>
<div class="t " style="left:112px;top:325px;letter-spacing:-0.1px">Library: mnEls</div>
<div class="a" style="left:273px;top:328px;width:0;height:0;border-left:4px solid #000;border-top:4px solid transparent;border-bottom:4px solid transparent"></div>
<div class="t " style="left:112px;top:345px;letter-spacing:-0.1px">Library: KM101</div>
<div class="a" style="left:273px;top:348px;width:0;height:0;border-left:4px solid #000;border-top:4px solid transparent;border-bottom:4px solid transparent"></div>
<div class="t " style="left:112px;top:365px;letter-spacing:-0.1px">Library: AGLKS</div>
<div class="a" style="left:273px;top:368px;width:0;height:0;border-left:4px solid #000;border-top:4px solid transparent;border-bottom:4px solid transparent"></div>
<div class="t " style="left:112px;top:385px;letter-spacing:-0.1px">Library: Main</div>
<div class="a" style="left:273px;top:388px;width:0;height:0;border-left:4px solid #000;border-top:4px solid transparent;border-bottom:4px solid transparent"></div>
<svg class="a" style="left:90px;top:405px" width="16" height="16" viewBox="0 0 24 24"><defs><radialGradient id="gq18" cx=".4" cy=".3" r=".7"><stop offset="0" stop-color="#a8d0ff"/><stop offset=".6" stop-color="#4a90f0"/><stop offset="1" stop-color="#2060d0"/></radialGradient></defs><circle cx="12" cy="12" r="11" fill="url(#gq18)" stroke="#3070d0" stroke-width=".8"/><text x="12" y="19" text-anchor="middle" font-family="Liberation Sans" font-weight="bold" font-size="17" fill="#fff">?</text></svg>
<div class="t " style="left:112px;top:406px;letter-spacing:-0.1px">Library: test</div>
<div class="a" style="left:273px;top:409px;width:0;height:0;border-left:4px solid #000;border-top:4px solid transparent;border-bottom:4px solid transparent"></div>
<div class="a" style="left:88px;top:424px;width:198px;height:22px;background:#000080"></div>
<svg class="a" style="left:90px;top:427px" width="16" height="16" viewBox="0 0 24 24"><defs><linearGradient id="gl19" x1="0" y1="0" x2="1" y2="1"><stop offset="0" stop-color="#d8eef4"/><stop offset=".5" stop-color="#a8d0dc"/><stop offset="1" stop-color="#84b4c4"/></linearGradient></defs><path d="M1.5 5L5 1.5H22.5V19L19 22.5H1.5Z" fill="url(#gl19)"/><g fill="none" stroke="#5a7a84" stroke-width=".8" stroke-dasharray="2 1.5"><path d="M5 1.5V19H22.5M5 19L1.5 22.5"/></g><g fill="none" stroke="#1a1a1a" stroke-width="1.6" stroke-dasharray="2.2 1.5"><path d="M1.5 5L5 1.5H22.5V19L19 22.5H1.5Z"/><path d="M1.5 5H19V22.5M19 5L22.5 1.5"/></g><path d="M0.5 0.5l4.5 4M19.5 0.5l4 3.5M0.5 19.5l4.5 4M20 20.5l4 3" stroke="#10e030" stroke-width="1.9"/><path d="M13.80 16.20 L23.20 15.10 L23.80 14.50 L23.20 13.90 L13.80 12.80ZM12.60 15.70 L19.03 20.58 L19.88 20.58 L19.88 19.73 L15.00 13.30ZM12.10 14.50 L13.20 23.90 L13.80 24.50 L14.40 23.90 L15.50 14.50ZM12.60 13.30 L7.72 19.73 L7.72 20.58 L8.57 20.58 L15.00 15.70ZM13.80 12.80 L4.40 13.90 L3.80 14.50 L4.40 15.10 L13.80 16.20ZM15.00 13.30 L8.57 8.42 L7.72 8.42 L7.72 9.27 L12.60 15.70ZM15.50 14.50 L14.40 5.10 L13.80 4.50 L13.20 5.10 L12.10 14.50ZM15.00 15.70 L19.88 9.27 L19.88 8.42 L19.03 8.42 L12.60 13.30Z" fill="#ffcc00" stroke="#d08800" stroke-width=".7" stroke-linejoin="round"/><circle cx="13.8" cy="14.5" r="2.4" fill="#ffee40"/><circle cx="13.8" cy="14.5" r="1.3" fill="#ffffa0"/></svg>
<div class="t w" style="left:112px;top:428px;letter-spacing:-0.1px">Library: originals</div>
<div class="a" style="left:273px;top:431px;width:0;height:0;border-left:4px solid #fff;border-top:4px solid transparent;border-bottom:4px solid transparent"></div>
<svg class="a" style="left:90px;top:451px" width="16" height="16" viewBox="0 0 24 24"><path d="M13.6 1L13.4 12.5" stroke="#7a7a88" stroke-width="3.4" stroke-linecap="round"/><path d="M13.6 1L13.4 12.5" stroke="#e8e8f0" stroke-width="2" stroke-linecap="round"/><path d="M21.4 3.2L13.8 12.5" stroke="#7a7a88" stroke-width="3.4" stroke-linecap="round"/><path d="M21.4 3.2L13.8 12.5" stroke="#e8e8f0" stroke-width="2" stroke-linecap="round"/><ellipse cx="7.1" cy="15.2" rx="4.3" ry="3.6" fill="none" stroke="#f4a000" stroke-width="2.6"/><ellipse cx="16.2" cy="18.6" rx="3.4" ry="4.3" fill="none" stroke="#f4a000" stroke-width="2.6"/><ellipse cx="7.1" cy="14.6" rx="4" ry="3" fill="none" stroke="#ffd020" stroke-width="1" opacity=".8"/></svg>
<div class="t " style="left:112px;top:452px;letter-spacing:-0.1px">Visual item cut</div>
<div class="t " style="left:241px;top:452px;letter-spacing:-0.1px">Ctrl+X</div>
<svg class="a" style="left:90px;top:473px" width="16" height="16" viewBox="0 0 24 24"><path d="M1.5 1.5H10.5L13.5 4.5V17.5H1.5Z" fill="#f8f8f8" stroke="#b8b8c0" stroke-width="1"/><path d="M10.5 1.5V4.5H13.5" fill="#d8d8e0" stroke="#b8b8c0" stroke-width=".8"/><path d="M10.5 6.5H19.5L22.5 9.5V22.5H10.5Z" fill="#f8f8f8" stroke="#b8b8c0" stroke-width="1"/><path d="M19.5 6.5V9.5H22.5" fill="#d8d8e0" stroke="#b8b8c0" stroke-width=".8"/></svg>
<div class="t " style="left:112px;top:474px;letter-spacing:-0.1px">Visual item copy</div>
<div class="t " style="left:241px;top:474px;letter-spacing:-0.1px">Ctrl+C</div>
<svg class="a" style="left:90px;top:495px" width="16" height="16" viewBox="0 0 24 24"><rect x="1.5" y="2.5" width="16" height="18" rx="2" fill="#c8c8c8" stroke="#9a9a9a"/><rect x="5" y="0.5" width="9" height="4" rx="1.5" fill="#e4e4e4" stroke="#8a8a8a"/><path d="M10.5 8.5H19.5L22.5 11.5V23.5H10.5Z" fill="#f4f4f4" stroke="#b4b4b4" stroke-width="1"/><path d="M19.5 8.5V11.5H22.5" fill="#d8d8e0" stroke="#b4b4b4" stroke-width=".8"/></svg>
<div class="t dis" style="left:112px;top:496px;letter-spacing:-0.1px">Visual item paste</div>
<div class="t dis" style="left:241px;top:496px;letter-spacing:-0.1px">Ctrl+V</div>
<div class="a" style="left:93px;top:514px;width:189px;height:1px;background:#aaa8a4"></div>
<svg class="a" style="left:90px;top:519px" width="16" height="16" viewBox="0 0 24 24"><path d="M4.5 7v13c0 2 3.5 3 7.5 3s7.5-1 7.5-3V7z" fill="#2c90d0"/><path d="M4.5 8c0 2 3.5 3 7.5 3s7.5-1 7.5-3" fill="none" stroke="#60c0f0" stroke-width="1.6"/><path d="M4.5 12.5c0 2 3.5 3 7.5 3s7.5-1 7.5-3" fill="none" stroke="#80d4f8" stroke-width="1.8"/><path d="M4.5 17c0 2 3.5 3 7.5 3s7.5-1 7.5-3" fill="none" stroke="#90dcff" stroke-width="1.8"/><path d="M19.5 8v12" stroke="#1c4a6a" stroke-width="1" opacity=".7"/><path d="M12.4 0L18.6 6H16.5V14H8V6H5.8Z" fill="#5420d8"/><path d="M11 6v7" stroke="#7a58f0" stroke-width="1.5"/></svg>
<div class="t " style="left:112px;top:520px;letter-spacing:-0.1px">Load from DB</div>
<svg class="a" style="left:90px;top:541px" width="16" height="16" viewBox="0 0 24 24"><path d="M4.5 7v13c0 2 3.5 3 7.5 3s7.5-1 7.5-3V7z" fill="#2c90d0"/><path d="M4.5 8c0 2 3.5 3 7.5 3s7.5-1 7.5-3" fill="none" stroke="#60c0f0" stroke-width="1.6"/><path d="M4.5 12.5c0 2 3.5 3 7.5 3s7.5-1 7.5-3" fill="none" stroke="#80d4f8" stroke-width="1.8"/><path d="M4.5 17c0 2 3.5 3 7.5 3s7.5-1 7.5-3" fill="none" stroke="#90dcff" stroke-width="1.8"/><path d="M19.5 8v12" stroke="#1c4a6a" stroke-width="1" opacity=".7"/><path d="M5 0H18.5L15.8 6.5V9H18.3L12 16L5.8 9H8.3V6.5Z" fill="#18e070"/><path d="M10 2l1 10" stroke="#60f8a0" stroke-width="1.2"/></svg>
<div class="t " style="left:112px;top:542px;letter-spacing:-0.1px">Save to DB</div>
<div class="t " style="left:241px;top:542px;letter-spacing:-0.1px">Ctrl+S</div>
<div class="a" style="left:93px;top:560px;width:189px;height:1px;background:#aaa8a4"></div>
<svg class="a" style="left:90px;top:565px" width="16" height="16" viewBox="0 0 24 24"><path d="M2 11.5C2 8 4 5 7 5H14V0.8L21.5 6L14 11.2V7.6H7.5C5.5 7.6 4.8 9.5 4.5 11.5Z" fill="#7ee07e" stroke="#2a6e2a" stroke-width="1.1" stroke-linejoin="round"/><path d="M22 12.5C22 16 20 19 17 19H10V23.2L2.5 18L10 12.8V16.4H16.5C18.5 16.4 19.2 14.5 19.5 12.5Z" fill="#7ee07e" stroke="#2a6e2a" stroke-width="1.1" stroke-linejoin="round"/><path d="M6 6.3H14M18 17.7H10" stroke="#c0ffc0" stroke-width="1" opacity=".8"/></svg>
<div class="t " style="left:112px;top:566px;letter-spacing:-0.1px">Refresh libraries</div>
<div class="a" style="left:286px;top:424px;width:137px;height:178px;background:#e6e4e1;border:1px solid #8c8a86"></div>
<div class="a" style="left:287px;top:579px;width:135px;height:22px;background:#000080"></div>
<svg class="a" style="left:289px;top:428px" width="16" height="16" viewBox="0 0 24 24"><g fill="#2a2a2a"><rect x="3.5" y=".6" width="1" height="1"/><rect x="3.5" y="22.1" width="1" height="1"/><rect x=".6" y="3.5" width="1" height="1"/><rect x="22.1" y="3.5" width="1" height="1"/><rect x="6.5" y=".6" width="1" height="1"/><rect x="6.5" y="22.1" width="1" height="1"/><rect x=".6" y="6.5" width="1" height="1"/><rect x="22.1" y="6.5" width="1" height="1"/><rect x="9.5" y=".6" width="1" height="1"/><rect x="9.5" y="22.1" width="1" height="1"/><rect x=".6" y="9.5" width="1" height="1"/><rect x="22.1" y="9.5" width="1" height="1"/><rect x="12.5" y=".6" width="1" height="1"/><rect x="12.5" y="22.1" width="1" height="1"/><rect x=".6" y="12.5" width="1" height="1"/><rect x="22.1" y="12.5" width="1" height="1"/><rect x="15.5" y=".6" width="1" height="1"/><rect x="15.5" y="22.1" width="1" height="1"/><rect x=".6" y="15.5" width="1" height="1"/><rect x="22.1" y="15.5" width="1" height="1"/><rect x="18.5" y=".6" width="1" height="1"/><rect x="18.5" y="22.1" width="1" height="1"/><rect x=".6" y="18.5" width="1" height="1"/><rect x="22.1" y="18.5" width="1" height="1"/></g><g fill="#50e868"><rect x=".2" y=".2" width="2" height="2"/><rect x="21.6" y=".2" width="2" height="2"/><rect x=".2" y="21.6" width="2" height="2"/><rect x="21.6" y="21.6" width="2" height="2"/></g><defs><linearGradient id="ge20" x1="0" y1="0" x2="1" y2="0"><stop offset="0" stop-color="#e0f0f0"/><stop offset=".4" stop-color="#98b0b0"/><stop offset="1" stop-color="#d8e8e8"/></linearGradient></defs><path d="M8.5 4C4.5 5 2 9 2.5 12C3 16 5 19 6.6 20.2L13.3 20C13 16 15 13.5 20.5 12.4C17 9 12 5 8.5 4Z" fill="url(#ge20)" stroke="#111" stroke-width="1.3"/><g fill="#40e8f0"><circle cx="8.5" cy="4" r="1.2"/><circle cx="20.5" cy="12.4" r="1.2"/><circle cx="13.3" cy="20" r="1.2"/><circle cx="6.6" cy="20.2" r="1.2"/></g></svg>
<div class="t " style="left:311px;top:429px;letter-spacing:-0.1px">Elementary figures</div>
<svg class="a" style="left:289px;top:450px" width="16" height="16" viewBox="0 0 24 24"><g fill="#2a2a2a"><rect x="3.5" y=".6" width="1" height="1"/><rect x="3.5" y="22.1" width="1" height="1"/><rect x=".6" y="3.5" width="1" height="1"/><rect x="22.1" y="3.5" width="1" height="1"/><rect x="6.5" y=".6" width="1" height="1"/><rect x="6.5" y="22.1" width="1" height="1"/><rect x=".6" y="6.5" width="1" height="1"/><rect x="22.1" y="6.5" width="1" height="1"/><rect x="9.5" y=".6" width="1" height="1"/><rect x="9.5" y="22.1" width="1" height="1"/><rect x=".6" y="9.5" width="1" height="1"/><rect x="22.1" y="9.5" width="1" height="1"/><rect x="12.5" y=".6" width="1" height="1"/><rect x="12.5" y="22.1" width="1" height="1"/><rect x=".6" y="12.5" width="1" height="1"/><rect x="22.1" y="12.5" width="1" height="1"/><rect x="15.5" y=".6" width="1" height="1"/><rect x="15.5" y="22.1" width="1" height="1"/><rect x=".6" y="15.5" width="1" height="1"/><rect x="22.1" y="15.5" width="1" height="1"/><rect x="18.5" y=".6" width="1" height="1"/><rect x="18.5" y="22.1" width="1" height="1"/><rect x=".6" y="18.5" width="1" height="1"/><rect x="22.1" y="18.5" width="1" height="1"/></g><g fill="#50e868"><rect x=".2" y=".2" width="2" height="2"/><rect x="21.6" y=".2" width="2" height="2"/><rect x=".2" y="21.6" width="2" height="2"/><rect x="21.6" y="21.6" width="2" height="2"/></g><rect x="2" y="7" width="21.5" height="9.5" fill="#ececec" stroke="#555" stroke-width=".8"/><path d="M2.5 16.5h21" stroke="#333" stroke-width="1.6"/><path d="M23 7.5v9" stroke="#333" stroke-width="1.2"/><text x="3.4" y="14" font-family="Liberation Sans" font-size="6.6" fill="#222">Enter</text><path d="M18.6 8.5v6" stroke="#333" stroke-width=".8"/></svg>
<div class="t " style="left:311px;top:451px;letter-spacing:-0.1px">Form's elements</div>
<svg class="a" style="left:289px;top:472px" width="16" height="16" viewBox="0 0 24 24"><g fill="#2a2a2a"><rect x="3.5" y=".6" width="1" height="1"/><rect x="3.5" y="22.1" width="1" height="1"/><rect x=".6" y="3.5" width="1" height="1"/><rect x="22.1" y="3.5" width="1" height="1"/><rect x="6.5" y=".6" width="1" height="1"/><rect x="6.5" y="22.1" width="1" height="1"/><rect x=".6" y="6.5" width="1" height="1"/><rect x="22.1" y="6.5" width="1" height="1"/><rect x="9.5" y=".6" width="1" height="1"/><rect x="9.5" y="22.1" width="1" height="1"/><rect x=".6" y="9.5" width="1" height="1"/><rect x="22.1" y="9.5" width="1" height="1"/><rect x="12.5" y=".6" width="1" height="1"/><rect x="12.5" y="22.1" width="1" height="1"/><rect x=".6" y="12.5" width="1" height="1"/><rect x="22.1" y="12.5" width="1" height="1"/><rect x="15.5" y=".6" width="1" height="1"/><rect x="15.5" y="22.1" width="1" height="1"/><rect x=".6" y="15.5" width="1" height="1"/><rect x="22.1" y="15.5" width="1" height="1"/><rect x="18.5" y=".6" width="1" height="1"/><rect x="18.5" y="22.1" width="1" height="1"/><rect x=".6" y="18.5" width="1" height="1"/><rect x="22.1" y="18.5" width="1" height="1"/></g><g fill="#50e868"><rect x=".2" y=".2" width="2" height="2"/><rect x="21.6" y=".2" width="2" height="2"/><rect x=".2" y="21.6" width="2" height="2"/><rect x="21.6" y="21.6" width="2" height="2"/></g><text x="2.4" y="15.2" font-family="Liberation Serif" font-size="11.5" fill="#999" letter-spacing="-.4" transform="translate(1 1.2)">Text</text><text x="2.4" y="15.2" font-family="Liberation Sans" font-size="10.5" fill="#1a1a1a" letter-spacing="-.35" stroke="#444" stroke-width=".3">Text</text></svg>
<div class="t " style="left:311px;top:473px;letter-spacing:-0.1px">Text fields</div>
<svg class="a" style="left:289px;top:494px" width="16" height="16" viewBox="0 0 24 24"><g fill="#2a2a2a"><rect x="3.5" y=".6" width="1" height="1"/><rect x="3.5" y="22.1" width="1" height="1"/><rect x=".6" y="3.5" width="1" height="1"/><rect x="22.1" y="3.5" width="1" height="1"/><rect x="6.5" y=".6" width="1" height="1"/><rect x="6.5" y="22.1" width="1" height="1"/><rect x=".6" y="6.5" width="1" height="1"/><rect x="22.1" y="6.5" width="1" height="1"/><rect x="9.5" y=".6" width="1" height="1"/><rect x="9.5" y="22.1" width="1" height="1"/><rect x=".6" y="9.5" width="1" height="1"/><rect x="22.1" y="9.5" width="1" height="1"/><rect x="12.5" y=".6" width="1" height="1"/><rect x="12.5" y="22.1" width="1" height="1"/><rect x=".6" y="12.5" width="1" height="1"/><rect x="22.1" y="12.5" width="1" height="1"/><rect x="15.5" y=".6" width="1" height="1"/><rect x="15.5" y="22.1" width="1" height="1"/><rect x=".6" y="15.5" width="1" height="1"/><rect x="22.1" y="15.5" width="1" height="1"/><rect x="18.5" y=".6" width="1" height="1"/><rect x="18.5" y="22.1" width="1" height="1"/><rect x=".6" y="18.5" width="1" height="1"/><rect x="22.1" y="18.5" width="1" height="1"/></g><g fill="#50e868"><rect x=".2" y=".2" width="2" height="2"/><rect x="21.6" y=".2" width="2" height="2"/><rect x=".2" y="21.6" width="2" height="2"/><rect x="21.6" y="21.6" width="2" height="2"/></g><rect x="2" y="2" width="20" height="20" fill="#8a8a8a"/><ellipse cx="12" cy="5.6" rx="1.9" ry="5.2" fill="#f6f6f6" stroke="#999" stroke-width=".4" transform="rotate(0 12 12)"/><ellipse cx="12" cy="5.6" rx="1.9" ry="5.2" fill="#f6f6f6" stroke="#999" stroke-width=".4" transform="rotate(22 12 12)"/><ellipse cx="12" cy="5.6" rx="1.9" ry="5.2" fill="#f6f6f6" stroke="#999" stroke-width=".4" transform="rotate(44 12 12)"/><ellipse cx="12" cy="5.6" rx="1.9" ry="5.2" fill="#f6f6f6" stroke="#999" stroke-width=".4" transform="rotate(66 12 12)"/><ellipse cx="12" cy="5.6" rx="1.9" ry="5.2" fill="#f6f6f6" stroke="#999" stroke-width=".4" transform="rotate(88 12 12)"/><ellipse cx="12" cy="5.6" rx="1.9" ry="5.2" fill="#f6f6f6" stroke="#999" stroke-width=".4" transform="rotate(110 12 12)"/><ellipse cx="12" cy="5.6" rx="1.9" ry="5.2" fill="#f6f6f6" stroke="#999" stroke-width=".4" transform="rotate(132 12 12)"/><ellipse cx="12" cy="5.6" rx="1.9" ry="5.2" fill="#f6f6f6" stroke="#999" stroke-width=".4" transform="rotate(154 12 12)"/><ellipse cx="12" cy="5.6" rx="1.9" ry="5.2" fill="#f6f6f6" stroke="#999" stroke-width=".4" transform="rotate(176 12 12)"/><ellipse cx="12" cy="5.6" rx="1.9" ry="5.2" fill="#f6f6f6" stroke="#999" stroke-width=".4" transform="rotate(198 12 12)"/><ellipse cx="12" cy="5.6" rx="1.9" ry="5.2" fill="#f6f6f6" stroke="#999" stroke-width=".4" transform="rotate(220 12 12)"/><ellipse cx="12" cy="5.6" rx="1.9" ry="5.2" fill="#f6f6f6" stroke="#999" stroke-width=".4" transform="rotate(242 12 12)"/><ellipse cx="12" cy="5.6" rx="1.9" ry="5.2" fill="#f6f6f6" stroke="#999" stroke-width=".4" transform="rotate(264 12 12)"/><ellipse cx="12" cy="5.6" rx="1.9" ry="5.2" fill="#f6f6f6" stroke="#999" stroke-width=".4" transform="rotate(286 12 12)"/><ellipse cx="12" cy="5.6" rx="1.9" ry="5.2" fill="#f6f6f6" stroke="#999" stroke-width=".4" transform="rotate(308 12 12)"/><ellipse cx="12" cy="5.6" rx="1.9" ry="5.2" fill="#f6f6f6" stroke="#999" stroke-width=".4" transform="rotate(330 12 12)"/><ellipse cx="12" cy="5.6" rx="1.9" ry="5.2" fill="#f6f6f6" stroke="#999" stroke-width=".4" transform="rotate(352 12 12)"/><circle cx="12" cy="12" r="3" fill="#c89818" stroke="#806010" stroke-width=".5"/></svg>
<div class="t " style="left:311px;top:495px;letter-spacing:-0.1px">Media</div>
<svg class="a" style="left:289px;top:516px" width="16" height="16" viewBox="0 0 24 24"><g fill="#f4f4f4"><rect x="3.5" y=".6" width="1" height="1"/><rect x="3.5" y="22.1" width="1" height="1"/><rect x=".6" y="3.5" width="1" height="1"/><rect x="22.1" y="3.5" width="1" height="1"/><rect x="6.5" y=".6" width="1" height="1"/><rect x="6.5" y="22.1" width="1" height="1"/><rect x=".6" y="6.5" width="1" height="1"/><rect x="22.1" y="6.5" width="1" height="1"/><rect x="9.5" y=".6" width="1" height="1"/><rect x="9.5" y="22.1" width="1" height="1"/><rect x=".6" y="9.5" width="1" height="1"/><rect x="22.1" y="9.5" width="1" height="1"/><rect x="12.5" y=".6" width="1" height="1"/><rect x="12.5" y="22.1" width="1" height="1"/><rect x=".6" y="12.5" width="1" height="1"/><rect x="22.1" y="12.5" width="1" height="1"/><rect x="15.5" y=".6" width="1" height="1"/><rect x="15.5" y="22.1" width="1" height="1"/><rect x=".6" y="15.5" width="1" height="1"/><rect x="22.1" y="15.5" width="1" height="1"/><rect x="18.5" y=".6" width="1" height="1"/><rect x="18.5" y="22.1" width="1" height="1"/><rect x=".6" y="18.5" width="1" height="1"/><rect x="22.1" y="18.5" width="1" height="1"/></g><g fill="#50e868"><rect x=".2" y=".2" width="2" height="2"/><rect x="21.6" y=".2" width="2" height="2"/><rect x=".2" y="21.6" width="2" height="2"/><rect x="21.6" y="21.6" width="2" height="2"/></g><rect x="2" y="2" width="20.6" height="20.6" fill="#000"/><path d="M7.1 2v20" stroke="#707070" stroke-width=".5"/><path d="M12.6 2v20" stroke="#707070" stroke-width=".5"/><path d="M17.6 2v20" stroke="#707070" stroke-width=".5"/><path d="M2 7.1h20" stroke="#707070" stroke-width=".5"/><path d="M2 12.6h20" stroke="#707070" stroke-width=".5"/><path d="M2 17.6h20" stroke="#707070" stroke-width=".5"/><path d="M3.3 21.9C6 19 7 16 8.5 11.9C10 10 12 9.8 14.7 9.2C18 6 19 4 22.4 1.3" stroke="#18c030" fill="none" stroke-width="1.4"/><path d="M2 14.3L4.2 13.3C6 11 6.5 9.5 7.1 9.5C9 9.5 9 11.9 10 11.9H16.2C18 11 19.5 11.5 20 12.8C21 16 21 19 21.9 21.4" stroke="#e0d030" fill="none" stroke-width="1.4"/></svg>
<div class="t " style="left:311px;top:517px;letter-spacing:-0.1px">Diagram</div>
<svg class="a" style="left:289px;top:538px" width="16" height="16" viewBox="0 0 24 24"><g fill="#2a2a2a"><rect x="3.5" y=".6" width="1" height="1"/><rect x="3.5" y="22.1" width="1" height="1"/><rect x=".6" y="3.5" width="1" height="1"/><rect x="22.1" y="3.5" width="1" height="1"/><rect x="6.5" y=".6" width="1" height="1"/><rect x="6.5" y="22.1" width="1" height="1"/><rect x=".6" y="6.5" width="1" height="1"/><rect x="22.1" y="6.5" width="1" height="1"/><rect x="9.5" y=".6" width="1" height="1"/><rect x="9.5" y="22.1" width="1" height="1"/><rect x=".6" y="9.5" width="1" height="1"/><rect x="22.1" y="9.5" width="1" height="1"/><rect x="12.5" y=".6" width="1" height="1"/><rect x="12.5" y="22.1" width="1" height="1"/><rect x=".6" y="12.5" width="1" height="1"/><rect x="22.1" y="12.5" width="1" height="1"/><rect x="15.5" y=".6" width="1" height="1"/><rect x="15.5" y="22.1" width="1" height="1"/><rect x=".6" y="15.5" width="1" height="1"/><rect x="22.1" y="15.5" width="1" height="1"/><rect x="18.5" y=".6" width="1" height="1"/><rect x="18.5" y="22.1" width="1" height="1"/><rect x=".6" y="18.5" width="1" height="1"/><rect x="22.1" y="18.5" width="1" height="1"/></g><g fill="#50e868"><rect x=".2" y=".2" width="2" height="2"/><rect x="21.6" y=".2" width="2" height="2"/><rect x=".2" y="21.6" width="2" height="2"/><rect x="21.6" y="21.6" width="2" height="2"/></g><rect x="1.8" y="1.8" width="20.8" height="20.1" fill="#f0f0f0" stroke="#444" stroke-width=".6"/><g stroke-width="1.5"><path d="M4 4.2h17" stroke="#e83030"/><path d="M4 7.8h13" stroke="#e83030"/><path d="M4 10.9h10" stroke="#20b030"/><path d="M4 14.5h10" stroke="#20b030"/><path d="M4 18.1h13" stroke="#d0d020"/></g></svg>
<div class="t " style="left:311px;top:539px;letter-spacing:-0.1px">Protocol</div>
<svg class="a" style="left:289px;top:560px" width="16" height="16" viewBox="0 0 24 24"><g fill="#2a2a2a"><rect x="3.5" y=".6" width="1" height="1"/><rect x="3.5" y="22.1" width="1" height="1"/><rect x=".6" y="3.5" width="1" height="1"/><rect x="22.1" y="3.5" width="1" height="1"/><rect x="6.5" y=".6" width="1" height="1"/><rect x="6.5" y="22.1" width="1" height="1"/><rect x=".6" y="6.5" width="1" height="1"/><rect x="22.1" y="6.5" width="1" height="1"/><rect x="9.5" y=".6" width="1" height="1"/><rect x="9.5" y="22.1" width="1" height="1"/><rect x=".6" y="9.5" width="1" height="1"/><rect x="22.1" y="9.5" width="1" height="1"/><rect x="12.5" y=".6" width="1" height="1"/><rect x="12.5" y="22.1" width="1" height="1"/><rect x=".6" y="12.5" width="1" height="1"/><rect x="22.1" y="12.5" width="1" height="1"/><rect x="15.5" y=".6" width="1" height="1"/><rect x="15.5" y="22.1" width="1" height="1"/><rect x=".6" y="15.5" width="1" height="1"/><rect x="22.1" y="15.5" width="1" height="1"/><rect x="18.5" y=".6" width="1" height="1"/><rect x="18.5" y="22.1" width="1" height="1"/><rect x=".6" y="18.5" width="1" height="1"/><rect x="22.1" y="18.5" width="1" height="1"/></g><g fill="#50e868"><rect x=".2" y=".2" width="2" height="2"/><rect x="21.6" y=".2" width="2" height="2"/><rect x=".2" y="21.6" width="2" height="2"/><rect x="21.6" y="21.6" width="2" height="2"/></g><path d="M3.5 2H21V17C21 20 19 22.5 16 22.5H3.5Z" fill="#d8d8d8" stroke="#555" stroke-width="1"/><path d="M4 8.1h16.5" stroke="#f0e040" stroke-width="1.6"/><path d="M4 11h16.5M4 14h16.5" stroke="#f8f8f8" stroke-width="1.4"/><path d="M5.1 3v19M15 3v12" stroke="#444" stroke-width=".8"/><path d="M21 17C21 20 19 22.5 16 22.5C17 21 17 19 21 17Z" fill="#111"/></svg>
<div class="t " style="left:311px;top:561px;letter-spacing:-0.1px">Document</div>
<svg class="a" style="left:289px;top:582px" width="16" height="16" viewBox="0 0 24 24"><rect x=".5" y=".5" width="23" height="23" fill="#d4d4d4" stroke="#8a8a8a" stroke-width="1"/><rect x="1" y="1" width="22" height="3" fill="#4aa0c0"/><path d="M3 14.5L7.3 5L11.5 14.5Z" fill="#20a040" stroke="#0c6020" stroke-width=".8"/><path d="M7.3 8L5.5 13H9Z" fill="#60d080"/><text x="14.5" y="13.5" font-family="Liberation Sans" font-weight="bold" font-style="italic" font-size="10" fill="#222">T</text><rect x="1.5" y="16" width="21" height="5.5" fill="#f0f0f0" stroke="#666" stroke-width=".5"/><text x="3" y="20.6" font-family="Liberation Sans" font-size="5" fill="#222">Value</text></svg>
<div class="t w" style="left:311px;top:583px;letter-spacing:-0.1px">Elements box</div>
<svg class="a" style="left:391px;top:591px" width="13" height="19" viewBox="0 0 13 19"><path d="M1 1v15l4-3 3 5 2-1-3-5h5z" fill="#fff" stroke="#000" stroke-width="1"/></svg>
</body></html>
